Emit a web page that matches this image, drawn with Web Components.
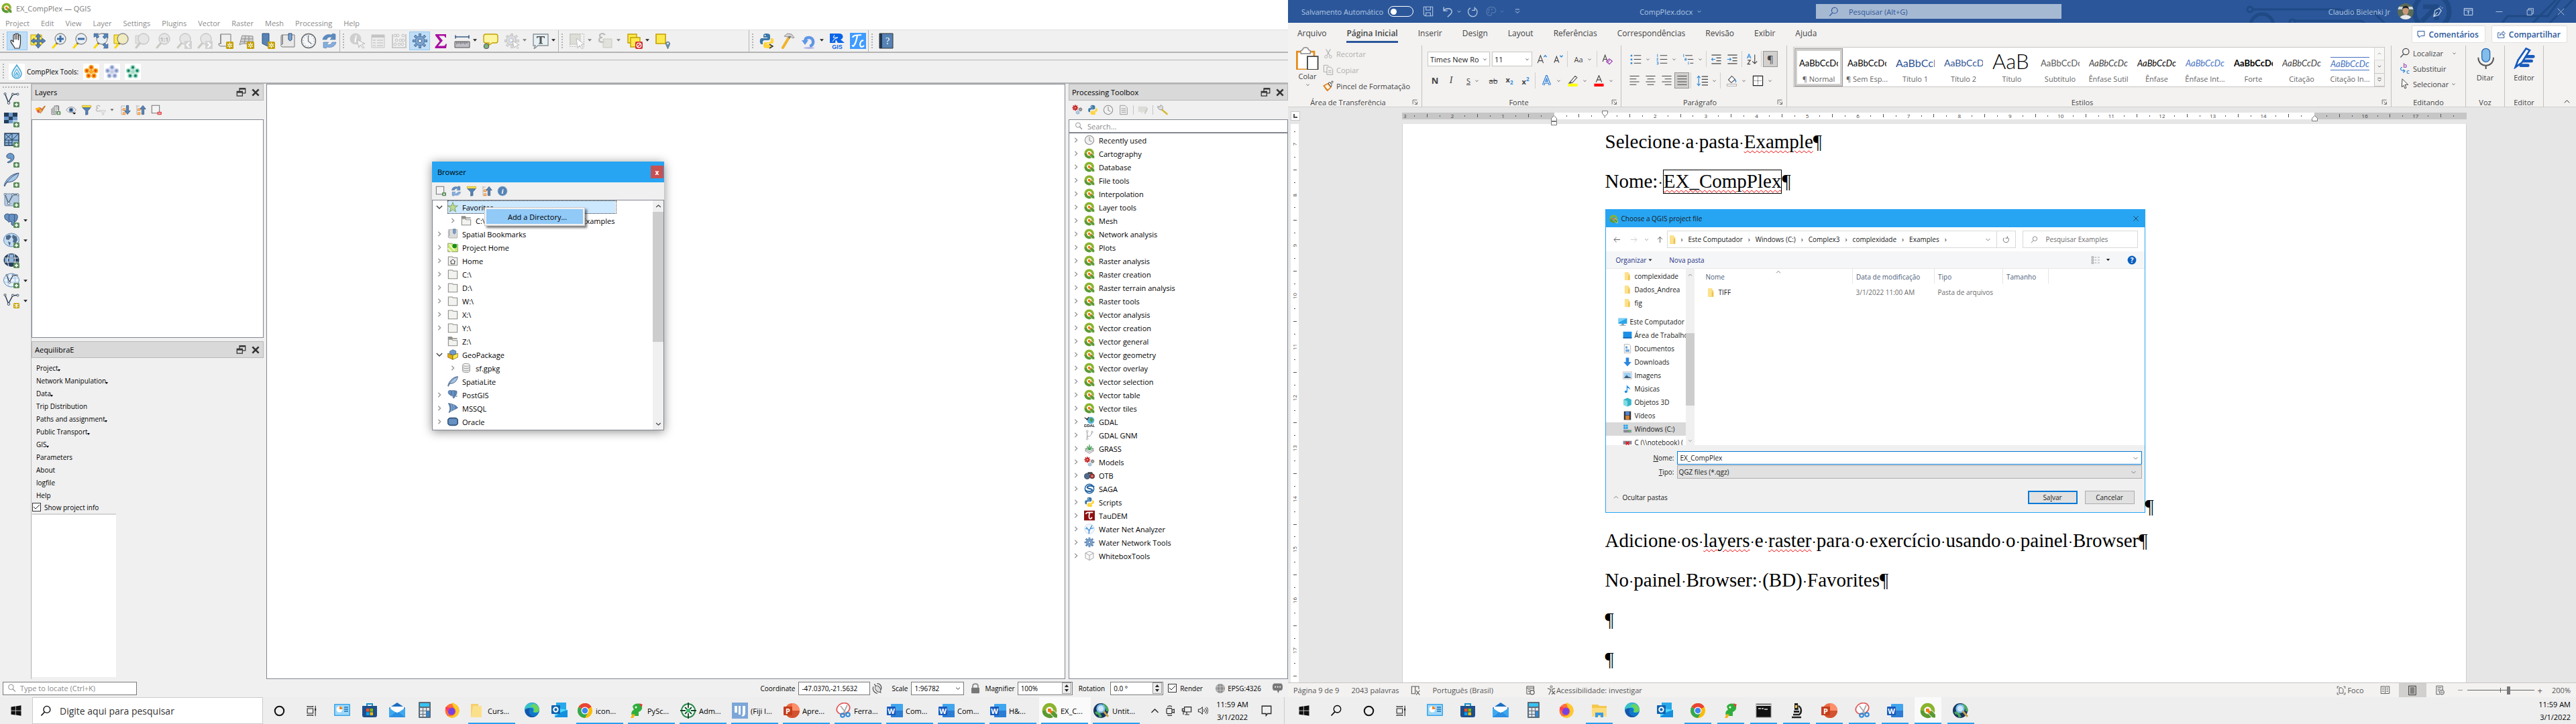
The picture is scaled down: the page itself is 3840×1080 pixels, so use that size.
<!DOCTYPE html>
<html lang="pt-BR">
<head>
<meta charset="utf-8">
<title>EX_CompPlex — QGIS / CompPlex.docx</title>
<style>
  html, body { margin: 0; height: 100%; }
  body { overflow: hidden; font-family: "Open Sans", "Noto Sans", sans-serif; font-size: 11px; color: #000; background: #fff; }
</style>
</head>
<body>
<desk-top></desk-top>
<script>
/* ---------- icon drawings, 24 x 24 unless a view box is given ---------- */
const plus = '<rect x="15" y="15" width="9" height="8" rx="1.5" fill="#5a8c5a"/><path d="M19.500 16.500v5M17 19h5" stroke="#fff" stroke-width="1.600"/>';
const star = '<rect x="13" y="13" width="11" height="11" rx="1.500" fill="#c4a000"/><path d="M18.500 14.500v8M15 16.500l7 4M22 16.500l-7 4" stroke="#fff" stroke-width="1.400"/><circle cx="18.500" cy="18.500" r="1" fill="#c4a000"/>';
const lens = (f, s, h) => `<path d="M9 15L3 22" stroke="${h}" stroke-width="3" stroke-linecap="round"/><path d="M10 14l-2 2.500" stroke="#555" stroke-width="3"/><circle cx="14" cy="9" r="8" fill="${f}" stroke="${s}" stroke-width="1.300"/>`;
const paleLens = '<path d="M9 15L3 22" stroke="#c9c9c4" stroke-width="3" stroke-linecap="round"/><circle cx="14" cy="9" r="8" fill="#e6e6e6" stroke="#c6c6c6" stroke-width="1.300"/>';
const vee = (c) => `<path d="M2.500 3l5 13L14 4l8-1" fill="none" stroke="${c}" stroke-width="1.500"/><g fill="#fff" stroke="${c}"><circle cx="2.500" cy="3" r="1.500"/><circle cx="8" cy="16.500" r="1.800"/><circle cx="14" cy="3.500" r="1.500"/><circle cx="21.500" cy="3.500" r="1.500"/></g>`;
const elephant = '<path d="M2 4c2-3 6-2 7-1 2-1 6-1 8 0 3-1 5 1 4 5-.5 3-2 5-3.500 6l-.5-2-1 5c0 3-4 3-4 0v-4l-3 1c0 0-1 1-2-.500l-1-2C3 12 1 7 2 4z" fill="#6691c2" stroke="#33527a"/><path d="M9 3c-1 3-1 6 0 9M16 3c1 3 1 6 0 9" stroke="#33527a" fill="none"/>';
const pyth = '<path d="M12 1c-5 0-5 2-5 4v2h6v1H4c-3 0-3 9 0 9h2v-3c0-2 1-3 3-3h5c2 0 3-1 3-3V4c0-2-2-3-5-3z" fill="#3b77a8"/><path d="M13 23c5 0 5-2 5-4v-2h-6v-1h8c3 0 3-8 0-8h-2v3c0 2-1 3-3 3h-5c-2 0-3 1-3 3v3c0 2 2 3 6 3z" fill="#ffd43b"/><circle cx="9.500" cy="4" r="1" fill="#fff"/>';
const gear = (c, s, hole) => `<g stroke="${s}" stroke-width="4"><path d="M12 1v22M1 12h22M4.200 4.200l15.600 15.600M19.800 4.200L4.200 19.800"/></g><g stroke="${c}" stroke-width="2.600"><path d="M12 2v20M2 12h20M5 5l14 14M19 5L5 19"/></g><circle cx="12" cy="12" r="7" fill="${c}" stroke="${s}" stroke-width=".7"/><circle cx="12" cy="12" r="2.600" fill="${hole}" stroke="${s}"/>`;
const refresh = '<path d="M2 10c1-6 7-9 13-7l2-2 4 1v8h-8l3-3c-4-2-7 0-8 3z" fill="#5d8cc0" stroke="#3d6a9a" stroke-width=".5"/><path d="M22 14c-1 6-7 9-13 7l-2 2-4-1v-8h8l-3 3c4 2 7 0 8-3z" fill="#86aede" stroke="#3d6a9a" stroke-width=".5"/>';
const folderGrey = '<path d="M2 3h9l2 2h9v17H2z" fill="#f2f2f0" stroke="#8b8b86" stroke-width="1.600"/>';
const folderY = '<path d="M5 2h10v4h3v16H5z" fill="#f8d775"/><path d="M15 10h3v12H8z" fill="#eec250"/><path d="M5 2h9v20H5z" fill="#fde28b"/>';
const qlogo = '<circle cx="11.500" cy="11.500" r="8" fill="none" stroke="#8ab42c" stroke-width="5.500"/><path d="M3.500 12a8 8 0 0 0 13 6.500" fill="none" stroke="#5b9a33" stroke-width="5.500"/><path d="M13 12h5l5.500 6v5h-4.500l-6-6z" fill="#5b9a33" stroke="#fff" stroke-width="1"/><path d="M9 9h5l-.5 2 3 3-3 2.500-3-3-1.500 1z" fill="#ee7913"/>';
const flower = (a, b) => `<rect width="24" height="24" fill="#fff"/><g fill="${a}"><circle cx="12" cy="5.500" r="3.800"/><circle cx="5.500" cy="10.500" r="3.800"/><circle cx="18.500" cy="10.500" r="3.800"/><circle cx="8" cy="18" r="3.800"/><circle cx="16" cy="18" r="3.800"/><circle cx="12" cy="12" r="3"/></g><g fill="${b}"><circle cx="12" cy="5.500" r="2"/><circle cx="5.500" cy="10.500" r="2"/><circle cx="18.500" cy="10.500" r="2"/><circle cx="8" cy="18" r="2"/><circle cx="16" cy="18" r="2"/></g>`;
const office = (c1, c2, c3, ch) => `<rect x="6" y="2" width="18" height="20" rx="1" fill="${c2}"/><path d="M6 12h18v9a1 1 0 0 1-1 1H7a1 1 0 0 1-1-1z" fill="${c3}"/><rect y="6" width="13" height="13" rx="1" fill="${c1}"/><text x="6.500" y="16.500" font-size="11" font-weight="700" text-anchor="middle" fill="#fff" font-family="Open Sans">${ch}</text>`;
const ln = (rows) => `<path d="${rows.map(([x, y, w]) => `M${x} ${y}h${w}`).join('')}" stroke="#444" stroke-width="1.500"/>`;
const tri = '<path d="M7 9h10l-5 6z" fill="#222"/>';

const ICONS = {
  qgis: qlogo,
  hand: '<path d="M8 23c-1-4-6-7-6-11 1-2 3 0 4 2V4c0-2 2.500-2 2.500 0v6V2.500c0-2 2.500-2 2.500 0V10V2.500c0-2 2.500-2 2.500 0V11l.5-6.500c0-2 2.500-2 2.500 0V14c0 4-1 6-1.500 9z" fill="#fff" stroke="#333" stroke-width="1.200"/>',
  panmap: '<path d="M1 3h16v15H1z" fill="#fce94f" stroke="#c4a000"/><path d="M12 1l4 5h-2.500v4.500H18V8l5 4-5 4v-2.500h-4.500V18H16l-4 5-4-5h2.500v-4.500H6V16l-5-4 5-4v2.500h4.500V6H8z" fill="#5683b5" stroke="#2f4f7c" stroke-width=".7"/>',
  zoomin: lens('#e8eff5', '#8a8a8a', '#fcd800') + '<path d="M14 4v10M9 9h10" stroke="#3d6ea8" stroke-width="3"/>',
  zoomout: lens('#e8eff5', '#8a8a8a', '#fcd800') + '<path d="M9 9h10" stroke="#3d6ea8" stroke-width="3"/>',
  zoomfull: lens('#e8eff5', '#8a8a8a', '#fcd800') + '<g fill="#5683b5" stroke="#2f4f7c" stroke-width=".5"><path d="M2 1h7L7 3l3 3-3 2-3-3-2 2z"/><path d="M23 1v7l-2-2-3 3-3-3 3-3-2-2z"/><path d="M23 23h-7l2-2-3-3 3-3 3 3 2-2z"/></g>',
  zoomsel: '<path d="M1 3h11v13H1z" fill="#fce94f" stroke="#c4a000"/>' + lens('#f0ebc0', '#8a8a8a', '#fcd800'),
  zoomlay: '<path d="M2 4h9v12H2z" fill="#e2e2e0" stroke="#ccc"/>' + paleLens,
  zoomnat: paleLens + '<text x="14" y="12.500" font-size="9" font-weight="700" text-anchor="middle" fill="#b5b5b5" font-family="Open Sans">1:1</text>',
  zoomlast: paleLens + '<rect x="13" y="12" width="11" height="12" fill="#d2d2d2"/><path d="M20.500 14l-4 4 4 4" fill="none" stroke="#fff" stroke-width="2"/>',
  zoomnext: paleLens + '<rect x="13" y="12" width="11" height="12" fill="#d2d2d2"/><path d="M16.500 14l4 4-4 4" fill="none" stroke="#fff" stroke-width="2"/>',
  newmap: '<path d="M5 2h15v18H6c-3 0-4-1-4-4h3z" fill="#eee" stroke="#777"/><path d="M5 2v15" stroke="#777"/>' + star,
  map3d: '<path d="M6 4l16 1v13l-12-2c-2 0-4 0-8 2z" fill="#d5d5d5" stroke="#8d8d8d"/><path d="M5 9h17M4 13h18M11 4l-2 12M16 4v13" stroke="#8d8d8d" fill="none"/>' + star,
  bookmark: '<path d="M5 1h10v20l-10-5z" fill="#5683b5" stroke="#2f4f7c"/>' + star,
  newbm: '<path d="M4 3h18v18H4c-3 0-3-4 0-4z" fill="#e8e8e8" stroke="#777"/><path d="M4 3v14M4 3c-2 0-2 1-2 3v12" stroke="#777" fill="none"/><path d="M13 1h5v9l-2.500 2-2.500-2z" fill="#7ba3d0" stroke="#2f4f7c"/>',
  clock: '<circle cx="12" cy="12" r="10.500" fill="#f4f6f8" stroke="#666" stroke-width="1.400"/><circle cx="12" cy="12" r="8" fill="none" stroke="#5a7ea8" stroke-dasharray="1 3.190"/><path d="M11.500 4v8.500l5 4" fill="none" stroke="#777" stroke-width="1.400"/>',
  clockpale: '<circle cx="12" cy="12" r="10" fill="#f2f2f2" stroke="#8d8d8d" stroke-width="1.600"/><path d="M12 5v7.500l5 3" fill="none" stroke="#8d8d8d" stroke-width="1.600"/>',
  refresh,
  identify: '<circle cx="9" cy="9" r="8.500" fill="#cfcfcf"/><text x="9" y="14" font-size="14" font-style="italic" font-weight="700" text-anchor="middle" fill="#fff" font-family="Liberation Serif">i</text><path d="M11 10l12 6-5 1 4 5-2 1-4-5-2 4z" fill="#f4f4f4" stroke="#bbb"/>',
  attr: '<path d="M2 3h19v19H2z" fill="#ececec" stroke="#c4c4c4"/><path d="M2 5h19" stroke="#c4c4c4" stroke-width="4"/><path d="M4 11h4M10 11h9M4 15h4M10 15h9M4 19h4M10 19h9" stroke="#c9c9c9" stroke-width="1.500"/>',
  abacus: '<path d="M2 2v20M22 2v20M1 22h22" stroke="#c0c0c0" stroke-width="1.600"/><g fill="#eee" stroke="#c0c0c0"><circle cx="6" cy="4" r="2"/><circle cx="10" cy="4" r="2"/><circle cx="18" cy="4" r="2"/><circle cx="8" cy="11" r="2"/><circle cx="14" cy="11" r="2"/><circle cx="18" cy="11" r="2"/><circle cx="6" cy="17" r="2"/><circle cx="12" cy="17" r="2"/><circle cx="17" cy="17" r="2"/></g>',
  gearblue: gear('#7ea3ce', '#3d6a9a', '#e8f1fa'),
  sigma: '<path d="M4 2h16v5h-1.500c-.5-2-1-2.500-3-2.500H9l6 7-7 8h8c2 0 2.500-1 3.500-3H21l-1 6.500H3.500V21l7-8.500L4 4z" fill="#a80e9e"/>',
  ruler: '<path d="M2 6h20M2 3.500v5M22 3.500v5" stroke="#3b5d86" stroke-width="1.600"/><path d="M1 13h22v9H1z" fill="#bdbdc4" stroke="#555"/><path d="M4 13v4M7 13v3M10 13v4M13 13v3M16 13v4M19 13v3" stroke="#555"/>',
  tip: '<path d="M5 2h15a3 3 0 0 1 3 3v7a3 3 0 0 1-3 3h-5l-6 4 1-4H5a3 3 0 0 1-3-3V5a3 3 0 0 1 3-3z" fill="#fcf4a0" stroke="#c4a000" stroke-width="1.400"/><circle cx="6" cy="20" r="3.800" fill="#7bb07b" stroke="#555"/>',
  gearrun: gear('#dcdcdc', '#c6c6c6', '#dcdcdc').replace(/<circle.*$/, '<circle cx="11" cy="11" r="7" fill="#e2e2e2" stroke="#bbb"/>') + '<circle cx="11" cy="11" r="4.500" fill="#ccd3da"/><path d="M9.500 8.500l4 2.500-4 2.500z" fill="#fff"/><path d="M13 12l10 6-4 .8 3 4-1.500.8-3-4-2 3z" fill="#fff" stroke="#bbb"/>',
  text: '<path d="M1 2h22v17H8l-6 5 2-5H1z" fill="#e6f0f5" stroke="#8b9297" stroke-width="1.400"/><path d="M6 5h12v3h-1l-.5-1.500h-3V15l1.500.5v1H9v-1l1.500-.5V6.500h-3L7 8H6z" fill="#555"/>',
  select: '<path d="M1.500 1.500h21v19h-21z" fill="none" stroke="#b8b8b8" stroke-dasharray="2 1.500"/><path d="M2 2h15v15H2z" fill="#deded8" stroke="#c6c6c0"/><path d="M11 8l12 9-5 .8 3.500 5-2 1-3.500-5-3 4z" fill="#fff" stroke="#bbb"/>',
  expr: '<path d="M11 3c-3-3-8-2-8 1 0 2 2 3 4 3-3 0-5 1-5 4 0 3 6 4 9 1" fill="none" stroke="#bbb" stroke-width="2.200"/><path d="M8 9h13v13H8z" fill="#deded8" stroke="#c8c8c0" fill-opacity=".8"/>',
  desel: '<path d="M2 2h13v13H2z" fill="#fce94f" stroke="#c4a000" stroke-width="1.400"/><path d="M6 7h14v14H6z" fill="#fce94f" stroke="#c4a000" stroke-width="1.400"/><rect x="13" y="13" width="11" height="11" rx="2" fill="#d4292b"/><circle cx="18.500" cy="18.500" r="3.300" fill="none" stroke="#fff" stroke-width="1.300"/><path d="M21 16l-5 5" stroke="#fff" stroke-width="1.300"/>',
  selloc: '<path d="M2 2h14v14H2z" fill="#fce94f" stroke="#c4a000" stroke-width="1.600"/><path d="M19.500 24l-3-7c-1-5 7-5 6 0z" fill="#6d8fa8" stroke="#4a6a80" stroke-width=".7"/><circle cx="19.500" cy="16" r="1.300" fill="#fff"/>',
  python: pyth, pythoncon: pyth + '<path d="M16 17l5 3-5 3" fill="none" stroke="#333" stroke-width="1.500"/>',
  hammer: '<path d="M5 22L14 7" stroke="#f0b429" stroke-width="4" stroke-linecap="round"/><path d="M14 8l2-3" stroke="#777" stroke-width="3"/><path d="M7 5l5-4 6 1 4 5-2 1-4-3-5 1z" fill="#d5d5d5" stroke="#777" stroke-width=".8"/>',
  undo: '<path d="M13 20c7-1 7-13-1-13-4 0-6 2-6 6" fill="none" stroke="#5f96e6" stroke-width="4.500"/><path d="M1 11h10l-5 7z" fill="#5f96e6"/><ellipse cx="12" cy="22.500" rx="8" ry="1.500" fill="#b3b3e6"/>',
  rgis: '<path d="M1 1h14c7 0 7 8 2 9l6 5H13l-3-5-1 5H1z" fill="#0a64e8"/><path d="M8 3l-2 4h7l-5 2-3 4" stroke="#fff" fill="none"/><text x="12" y="23.500" font-size="9" font-weight="700" text-anchor="middle" fill="#0a64e8" font-family="Liberation Sans">GIS</text>',
  tc: '<rect width="24" height="24" fill="#3f9bff"/><path d="M4 7c1-4 5-3 13-4M11 4c-1 6-2 12-6 16M20 12c-4-3-7 8-3 9 2 0 3-1 4-2M3 19l3 1" fill="none" stroke="#fff" stroke-width="2.200"/>',
  book: '<path d="M2 1h20v22H2z" fill="#5683b5" stroke="#333"/><path d="M2 1h4v22H2z" fill="#22364e"/><text x="14" y="17" font-size="14" text-anchor="middle" fill="#fff" font-family="Liberation Serif">?</text>',
  drop: '<rect width="24" height="24" fill="#fff"/><path d="M12 2c3 5 7 9 7 13a7 7 0 0 1-14 0c0-4 4-8 7-13z" fill="#e6f5fc" stroke="#4fa9d6" stroke-width="1.600"/><path d="M12 8c2 3 4 5 4 8a4 4 0 0 1-8 0c0-3 2-5 4-8zM12 13l2 4h-4z" fill="none" stroke="#4fa9d6" stroke-width="1.200"/>',
  flower1: flower('#f9a825', '#e65100'), flower2: flower('#c3cde8', '#8093c4'), flower3: flower('#a5dcc6', '#11806a'),
  addvec: vee('#2d3f56') + plus,
  addras: '<path d="M1 1h20v16H1z" fill="#6d9acb"/><path d="M1 1h7v6H1zM14 1h7v6h-7zM8 7h6v5H8zM1 12h7v5H1z" fill="#253d58"/><path d="M14 12h7v5h-7z" fill="#b8d0ea"/>' + plus,
  addmesh: '<path d="M2 2h21v18H2z" fill="#8db4dc" stroke="#253d58" stroke-width="1.400"/><path d="M2 2l11 10M13 2L2 12M2 12h21M13 2v18M13 12L23 2M8 12v8M2 16h11" stroke="#253d58" fill="none"/>' + plus,
  addcsv: '<path d="M5 5c2-5 11-4 11 2 0 6-5 8-9 9l-1-1c4-2 6-4 5-6-3 1-7 0-6-4z" fill="#6d9acb" stroke="#33527a"/>' + plus,
  addlite: '<path d="M1 20c2-7 8-17 22-19-1 7-6 14-18 14l-3 6z" fill="#a9c6e6" stroke="#33527a"/><path d="M3 18C8 10 14 5 21 2" stroke="#33527a" fill="none"/>' + plus,
  addvirt: '<rect x="2" y="2" width="21" height="18" rx="2" fill="#b5cbe2" stroke="#7b92ad"/>' + vee('#55687e') + plus,
  addpg: elephant + plus,
  addwms: '<ellipse cx="12" cy="11" rx="11.500" ry="10" fill="#c4daf0" stroke="#5f8ab8"/><path d="M4 5l5-2 3 3-4 5-4-1zM14 3l6 3 1 5-3 5-4-2 1-4-2-3zM7 13l4 2-2 5z" fill="#4d6b8c"/>' + plus,
  addwcs: '<ellipse cx="12" cy="11" rx="11.500" ry="10" fill="#25405f"/><path d="M2 8h20M2 14h20M8 2c-2 6-2 12 0 18M16 2c2 6 2 12 0 18" stroke="#fff" fill="none"/><path d="M8.500 8.500h7v5h-7zM9 2.500h6V7H9zM2.500 9h4v4h-4z" fill="#8fb6e0"/>' + plus,
  addwfs: '<ellipse cx="12" cy="11" rx="11.500" ry="10" fill="#eaf2fa" stroke="#5f8ab8"/><path d="M2 8h20M2 14h20M8 2c-2 6-2 12 0 18M16 2c2 6 2 12 0 18" stroke="#9fc0e2" fill="none"/><g transform="translate(3 1) scale(.8)">' + vee('#2d3f56') + '</g>' + plus,
  newvec: vee('#2d3f56') + '<rect x="15" y="15" width="9" height="8" rx="1.500" fill="#c4a000"/><path d="M19.500 16v6M16.500 17l6 4M22.500 17l-6 4" stroke="#fff" stroke-width="1.300"/>',
  style: '<path d="M1 9l10-3 8 6-9 6z" fill="#f08"/><path d="M1 9l9-3 3 3-9 6z" fill="#fb0"/><path d="M4 13l7-3 3 4-7 5z" fill="#e44"/><path d="M9 14l5-4 3 5-5 4z" fill="#49c"/><path d="M13 12l9-10 2 2-8 11z" fill="#c87f2b"/><path d="M8 12l5-3 4 5-5 6z" fill="#e8a94a" stroke="#a56a20" stroke-width=".6"/>',
  group: '<path d="M9 3h10v13H9zM6 6v13h10M3 9v13h10" fill="none" stroke="#777" stroke-width="1.500"/><path d="M13 14V5c0-4 4-4 4 0v8" fill="none" stroke="#777" stroke-width="1.300"/><rect x="14" y="15" width="9" height="8" rx="1.500" fill="#5a8c5a"/><path d="M18.500 16.500v5M16 19h5" stroke="#fff" stroke-width="1.500"/>',
  eye: '<path d="M1 12c5-9 17-9 22 0-5 8-17 8-22 0z" fill="#eee" stroke="#999" stroke-width="1.500"/><circle cx="12" cy="12" r="5" fill="#5683b5"/><circle cx="12" cy="12" r="2" fill="#222"/><path d="M15 18h8l-4 4z" fill="#111"/>',
  filter: '<path d="M2 2h20v4H2z" fill="#fce94f" stroke="#b99b00"/><path d="M3 7h18l-6 7v8l-5 1v-9z" fill="#5683b5" stroke="#33527a"/>',
  filterexp: '<path d="M11 4c-3-3-8-2-8 1 0 2 2 3 4 3-3 0-5 1-5 4 0 3 6 4 9 1" fill="none" stroke="#bbb" stroke-width="2"/><path d="M11 13h12v2l-4 3v5h-3v-5l-5-3z" fill="#e6e6e6" stroke="#c4c4c4"/>',
  expand: '<path d="M3 3h8M3 3v19h4M3 12h4" stroke="#999" fill="none"/><path d="M7 9h4v4H7zM7 18h4v4H7z" fill="#fff" stroke="#f57900" stroke-width="1.600"/><path d="M14 2h5v12h4l-6.500 8L10 14h4z" fill="#5683b5" stroke="#33527a"/>',
  collapse: '<path d="M1 3h8M3 3v19h4M3 12h4" stroke="#999" fill="none"/><path d="M6 9h4v4H6zM6 18h4v4H6z" fill="#fff" stroke="#f57900" stroke-width="1.600"/><path d="M14 22h5V10h4L16.500 2 10 10h4z" fill="#5683b5" stroke="#33527a"/>',
  rmlayer: '<path d="M2 2h17v17H2z" fill="#f4f4f4" stroke="#777" stroke-width="1.600"/><rect x="14" y="16" width="10" height="7" rx="2" fill="#e8424a"/><path d="M16 19.500h6" stroke="#fff" stroke-width="1.600"/>',
  addlayer: '<path d="M2 2h17v17H2z" fill="#f4f4f4" stroke="#777" stroke-width="1.600"/><rect x="15" y="15" width="9" height="8" rx="2" fill="#5a8c5a"/><circle cx="19.500" cy="19" r="1.800" fill="#fff"/>',
  info: '<circle cx="12" cy="12" r="10.500" fill="#5683b5" stroke="#8aa8cc"/><text x="12" y="18" font-size="17" font-style="italic" font-weight="700" text-anchor="middle" fill="#fff" font-family="Liberation Serif">i</text>',
  float: '<path d="M8 3h14v11H8z" fill="none" stroke="#333" stroke-width="2"/><path d="M8 4h14" stroke="#333" stroke-width="3.500"/><path d="M2 10h13v11H2z" fill="#d9d9d9" stroke="#333" stroke-width="2"/><path d="M2 12h13" stroke="#333" stroke-width="3.500"/>',
  closex: '<path d="M4 4l16 16M20 4L4 20" stroke="#333" stroke-width="4.500"/>',
  chev: '<path d="M8 4l8 8-8 8" fill="none" stroke="#9a9a9a" stroke-width="3.400"/>',
  chevopen: '<path d="M2 7l10 10L22 7" fill="none" stroke="#444" stroke-width="3.400"/>',
  down: '<path d="M3 8l9 8 9-8" fill="none" stroke="#444" stroke-width="3"/>',
  up: '<path d="M3 16l9-8 9 8" fill="none" stroke="#444" stroke-width="3"/>',
  tri, starfav: '<path d="M12 1l3 8h8l-6.500 5 2.500 8.500-7-5-7 5L7.500 14 1 9h8z" fill="#b9dc92" stroke="#7d9460" stroke-width="1.300"/>',
  folder: folderGrey, folderlink: '<path d="M1 2h9l2 3h10v2H1z" fill="#8b8b86"/><path d="M2 8h8l2 2h10v12H2z" fill="#f2f2f0" stroke="#8b8b86" stroke-width="1.600"/>',
  folderhome: folderGrey + '<path d="M6 14l6-5 6 5M8 13v6h8v-6" fill="none" stroke="#333" stroke-width="1.400"/>',
  projhome: '<path d="M1 3h9l2 2h11v17H1z" fill="#cdea6e" stroke="#777"/><path d="M1 14l8 8M4 5l12 14" stroke="#fff" stroke-width="2"/><circle cx="16" cy="9" r="5" fill="#169016"/>',
  sbm: '<path d="M4 2h18v19H4c-3 0-3-4 0-4z" fill="#dcdcdc" stroke="#999"/><path d="M4 2v15M4 2c-2 0-2 2-2 3v13" stroke="#999" fill="#eee"/><path d="M13 1h5v9l-2.500 2-2.500-2z" fill="#7ba3d0" stroke="#4a6a90"/>',
  gpkg: '<path d="M12 1l7 3v8H5V5z" fill="#6d9acb" stroke="#33527a"/><path d="M1 9l11 5v9L1 18z" fill="#e0ae12" stroke="#6b5200"/><path d="M23 9l-11 5v9l11-5z" fill="#fce94f" stroke="#6b5200"/>',
  db: '<path d="M4 5v14c0 4 16 4 16 0V5" fill="#eee" stroke="#999" stroke-width="1.500"/><ellipse cx="12" cy="5" rx="8" ry="3" fill="#f8f8f8" stroke="#999" stroke-width="1.500"/><path d="M4 10c0 4 16 4 16 0M4 15c0 4 16 4 16 0" fill="none" stroke="#999" stroke-width="1.500"/>',
  lite: '<path d="M1 22c2-8 8-19 22-21-1 8-6 16-18 16l-3 6z" fill="#a9c6e6" stroke="#33527a" stroke-width="1.300"/><path d="M3 19C8 11 14 5 21 2" stroke="#33527a" fill="none"/>',
  pg: elephant + '<path d="M17 15h5" stroke="#33527a" stroke-width="1.500"/>',
  mssql: '<path d="M2 1c8 1 18 4 21 10-6 4-12 5-20 11 4-8 3-14-1-21z" fill="#5683b5" stroke="#33527a"/><path d="M8 3c3 5 3 10 0 15M13 4c3 5 2 8 1 11" stroke="#cfe0f2" fill="none"/>',
  oracle: '<rect x="1" y="4" width="22" height="16" rx="6" fill="#6691c2" stroke="#33527a" stroke-width="2.500"/>',
  bluebox: '<path d="M1 1h22v22H1z" fill="#5a96d6"/>',
  gdal: '<circle cx="15" cy="9" r="8" fill="#5ab3dc"/><path d="M12 6l5-3 4 5-5 6z" fill="#4a9a4a"/><path d="M1 3l8 5M5 8l6-6" stroke="#333" stroke-width="2"/><text x="12" y="23.500" font-size="9" font-weight="700" text-anchor="middle" fill="#111" font-family="Liberation Sans">GDAL</text>',
  gnm: '<path d="M7 4v16M7 15c6 0 9-1 10-8" fill="none" stroke="#999" stroke-width="1.500"/><circle cx="7" cy="3.500" r="2" fill="#fff" stroke="#888"/><circle cx="7" cy="20.500" r="2" fill="#fff" stroke="#888"/><circle cx="18" cy="5.500" r="2" fill="#fff" stroke="#888"/>',
  grass: '<path d="M12 12l10 5-10 6-10-6z" fill="#eee" stroke="#666"/><path d="M12 8l10 5-10 6-10-6z" fill="#fff" stroke="#666"/><path d="M12 16V3M12 15L7 7M12 15l5-8M12 15l-7-3M12 15l7-3" stroke="#2d9a41" stroke-width="1.700"/>',
  models: '<g transform="translate(0 0) scale(.6)">' + gear('#d4292b', '#b01e20', '#fff') + '</g><g transform="translate(14 6) scale(.4)">' + gear('#888', '#777', '#fff') + '</g><g transform="translate(8 13) scale(.4)">' + gear('#a9c6e6', '#8ab', '#fff') + '</g>',
  otb: '<circle cx="7" cy="14" r="6.500" fill="#4c6c92" stroke="#333"/><circle cx="18" cy="14" r="5.500" fill="#bf2734" stroke="#333"/><path d="M8 5h10l2 4H9z" fill="#444"/><circle cx="18" cy="14" r="2" fill="#8c8"/>',
  saga: '<circle cx="12" cy="12" r="10" fill="#fff" stroke="#1b5fa0" stroke-width="2.200"/><path d="M23 8c-6-4-15-3-16 1 0 4 11 2 11 6 0 4-10 4-16 0" fill="none" stroke="#1b5fa0" stroke-width="3"/>',
  tau: '<rect y="1" width="24" height="22" fill="#8c0f12"/><path d="M4 9c1-5 4-4 16-4M13 5c-2 4-3 13 0 14 3 1 4-2 5-3" fill="none" stroke="#fff" stroke-width="2.600"/>',
  wna: '<circle cx="12" cy="12" r="11" fill="#f2f7fb" stroke="#bcd"/><path d="M11 23c-1-6 0-8 3-12l4-7M13 12l8-2M11 16L5 8M7 11L3 12" fill="none" stroke="#3b8ad6" stroke-width="1.800"/>',
  wbt: '<path d="M12 2l9 4v11l-9 5-9-5V6zM3 6l9 5 9-5M12 11v11" fill="#fafafa" stroke="#999" stroke-width="1.300"/>',
  doc: '<path d="M4 2h11l5 5v15H4z" fill="#eee" stroke="#999" stroke-width="1.400"/><path d="M7 9h10M7 13h10M7 17h10" stroke="#999" stroke-width="1.400"/>',
  editm: '<path d="M1 4h20v12h-9l-4 5v-5H1z" fill="#dcdcd8"/><path d="M14 20l7-13 2 2-6 12z" fill="#c9c9c4"/>',
  wrench: '<path d="M9 10l14 12" stroke="#e3cc55" stroke-width="4.500"/><path d="M9 10l14 12" stroke="#7a6a20" stroke-width=".6"/><path d="M1 4l5 1 2-4c4 1 6 5 4 9L9 12C5 12 1 9 1 4z" fill="#ddd" stroke="#777"/>',
  search: '<circle cx="14" cy="9" r="7" fill="none" stroke="currentColor" stroke-width="1.800"/><path d="M9 14.500L2 22" stroke="currentColor" stroke-width="2"/>',
  searchr: '<circle cx="10" cy="9" r="7" fill="none" stroke="#888" stroke-width="1.800"/><path d="M15 14.500l7 7" stroke="#888" stroke-width="2.200"/>',
  lock: '<path d="M6 11V7c0-7 12-7 12 0v4" fill="none" stroke="#888" stroke-width="2.500"/><rect x="3" y="10" width="18" height="13" rx="2" fill="#777"/>',
  mouse: '<path d="M5 2l15 20M11 1c8 0 12 8 8 15M3 8c-3 7 2 14 9 15" stroke="#555" stroke-width="2" fill="none"/><ellipse cx="13" cy="13" rx="5" ry="8" transform="rotate(-35 13 13)" fill="#ddd" stroke="#555" stroke-width="1.500"/>',
  globe: '<circle cx="12" cy="12" r="10.500" fill="#8c8c8c"/><path d="M2 8h20M2 16h20M12 1v22M7 2c-3 7-3 13 0 20M17 2c3 7 3 13 0 20" stroke="#ddd" fill="none"/>',
  bubble: '<path d="M5 2h14c5 0 5 15 0 15h-3l-3 6-2-6H5C0 17 0 2 5 2z" fill="#777"/><path d="M6 9.500h2.500M11 9.500h2.500M16 9.500h2.500" stroke="#fff" stroke-width="2.500"/>',
  /* --- taskbar --- */
  win: '<path d="M2 4.500l8.500-1.200v8.200H2zM11.500 3.200L22 1.700v9.800H11.500zM2 12.500h8.500v8.200L2 19.500zM11.500 12.500H22v9.800l-10.500-1.500z" fill="#111"/>',
  cortana: '<circle cx="12" cy="12" r="8.500" fill="none" stroke="#111" stroke-width="2.600"/>',
  taskview: '<path d="M3 7h12v10H3zM3 4V1.500M15 4V1.500M3 20v2.500M15 20v2.500M3 3h12M3 21h12M20 1v22" fill="none" stroke="#222" stroke-width="1.500"/><path d="M18.500 7h3v4h-3z" fill="#222"/>',
  cpl: '<rect x="0" y="3" width="24" height="18" rx="1" fill="#3aa4e8"/><rect x="1.500" y="4.500" width="21" height="15" fill="#9fd8f8"/><circle cx="8" cy="11" r="4.500" fill="#fff"/><path d="M8 11V6.500a4.500 4.500 0 0 1 4.500 4.500z" fill="#f58220"/><path d="M15 8h6M15 11h6M15 14h6" stroke="#1b6fb5" stroke-width="1.500"/>',
  store: '<path d="M8 6V3h8v3" fill="none" stroke="#1593c9" stroke-width="2"/><path d="M1 6h22v14a3 3 0 0 1-3 3H4a3 3 0 0 1-3-3z" fill="#1f4e8c"/><path d="M7 10h4.500v4.500H7z" fill="#f25022"/><path d="M12.500 10H17v4.500h-4.500z" fill="#7fba00"/><path d="M7 15.500h4.500V20H7z" fill="#00a4ef"/><path d="M12.500 15.500H17V20h-4.500z" fill="#ffb900"/>',
  mail: '<path d="M0 9l12-8 12 8v14H0z" fill="#1b6fc2"/><path d="M2 7h20v7l-10 6L2 14z" fill="#fff"/><path d="M0 9l12 8 12-8v14H0z" fill="#3fa9f0"/><path d="M0 23l10-8 2 1.500 2-1.500 10 8z" fill="#2b8ee0"/>',
  calc: '<rect x="3" y="0" width="18" height="24" rx="1" fill="#5d6a78"/><path d="M5 2h14v5H5z" fill="#35c3f0"/><path d="M5 9h4v4H5zM10 9h4v4h-4zM15 9h4v4h-4zM5 14h4v4H5zM10 14h4v4h-4zM5 19h4v3H5zM10 19h4v3h-4z" fill="#dfe4e8"/><path d="M15 14h4v8h-4z" fill="#2b88d8"/>',
  firefox: '<circle cx="12" cy="13" r="10.500" fill="#ff7139"/><path d="M12 1c6 2 11 6 10.500 13A10.500 10.500 0 0 1 5 21c8 2 14-3 12-9-1-3-5-5-5-11z" fill="#ffca28"/><circle cx="11" cy="14" r="5.500" fill="#7542e4"/><path d="M2 8c2-1 6 0 8 2-3 0-4 2-3 4-3 0-5-2-5-6z" fill="#ff3d52"/>',
  folderw: '<path d="M3 2h11v3h5v17H3z" fill="#f5cf6b"/><path d="M6 5h13v17H3z" fill="#fbe08c"/>',
  explorer: '<path d="M1 3h9l2 2h11v16H1z" fill="#f5c84c"/><path d="M1 8h22v13H1z" fill="#fbdd7f"/><path d="M6 22v-7h12v7h-4v-3h-4v3z" fill="#3b9be6"/>',
  edge: '<circle cx="12" cy="12" r="11" fill="#1179c9"/><path d="M1 11C2 2 12-1 19 4c4 3 5 9 2 11-3 2-8 1-7-1 2-3-1-6-5-5-4 0-7 2-8 2z" fill="#38c3c9"/><path d="M14 3c6 1 10 6 8.500 10-2 4-8 3-8.500 1 4-5-2-8-6-6z" fill="#6ad45b"/><path d="M9 10c-4 5 0 13 9 11-8 5-16-1-16-8 1-3 4-4 7-3z" fill="#1554a8"/>',
  outlook: '<path d="M7 1h15v12H7z" fill="#28a8ea"/><path d="M5 9l19 3v10H5z" fill="#50d9ff"/><path d="M5 22l10-7 9-3v11H5z" fill="#1490df"/><rect y="5" width="13" height="13" rx="1" fill="#0f64b0"/><circle cx="6.500" cy="11.500" r="3.200" fill="none" stroke="#fff" stroke-width="2"/>',
  chrome: '<circle cx="12" cy="12" r="11" fill="#fbbc04"/><path d="M12 12L2.500 6.500A11 11 0 0 1 21.500 6.500z" fill="#ea4335"/><path d="M12 1a11 11 0 0 1 9.500 5.500H12z" fill="#ea4335"/><path d="M12 12l-9.500-5.500A11 11 0 0 0 12 23l4.500-8z" fill="#34a853"/><circle cx="12" cy="12" r="5.500" fill="#fff"/><circle cx="12" cy="12" r="4.300" fill="#4285f4"/>',
  pys: '<path d="M6 6c2-6 13-6 14 0 1 4-2 7-5 8v6H6c-3-2-2-8 2-9z" fill="#2fae3c"/><path d="M3 23l3-6 4 1-3 5z" fill="#f6b41a"/><path d="M16 1l5 2-2 4z" fill="#e33"/><circle cx="11" cy="7" r="1.500" fill="#fff"/>',
  adm: '<circle cx="12" cy="12" r="10" fill="#fff" stroke="#2b8a4b" stroke-width="2"/><path d="M12 0v8M12 16v8M0 12h8M16 12h8M7 7l3 3M17 7l-3 3M7 17l3-3M17 17l-3-3" stroke="#14452a" stroke-width="1.800"/><circle cx="12" cy="12" r="3" fill="#3fbf6b"/>',
  fiji: '<rect width="24" height="24" fill="#7ca6d8"/><path d="M4 5h4v10H4zM10 5h3v13h-3zM16 5h4v10c0 6-4 6-6 5 2-1 2-2 2-5z" fill="#fff"/>',
  ppt: '<circle cx="13" cy="12" r="11" fill="#ed6c47"/><path d="M13 1a11 11 0 0 1 11 11H13z" fill="#ff8f6b"/><path d="M2 12h22a11 11 0 0 1-22 0z" fill="#d35230"/><rect y="6" width="13" height="13" rx="1" fill="#c43e1c"/><text x="6.500" y="16.500" font-size="11" font-weight="700" text-anchor="middle" fill="#fff" font-family="Open Sans">P</text>',
  snip: '<ellipse cx="12" cy="9" rx="10" ry="8" transform="rotate(-25 12 9)" fill="#fff" stroke="#e05a5a" stroke-width="1.800"/><path d="M8 5l9 12M18 4l-6 13" stroke="#aaa" stroke-width="1.800"/><circle cx="11" cy="19" r="2.800" fill="none" stroke="#2b88d8" stroke-width="2"/><circle cx="19" cy="18" r="2.800" fill="none" stroke="#2b88d8" stroke-width="2"/>',
  word: office('#185abd', '#41a5ee', '#2b7cd3', 'W'),
  magnify: '<circle cx="11" cy="12" r="11" fill="#17365f"/><path d="M3 16c4-2 6 1 8 6M14 3c4 2 7 6 7 10" stroke="#4ba85a" stroke-width="4" fill="none"/><circle cx="11" cy="9" r="5.500" fill="#cfe6fb" stroke="#7cc0f0" stroke-width="2.500"/><path d="M15 13l7 8" stroke="#c9a14a" stroke-width="3"/>',
  cmd: '<rect x="1" y="2" width="22" height="20" fill="#111" stroke="#888"/><path d="M1 4h22" stroke="#ddd" stroke-width="2"/><path d="M4 9h4M9 9h3M13 10h5" stroke="#ddd" stroke-width="1.500"/>',
  micro: '<path d="M9 1h5l1 10h-6zM8 12h8v3H8z" fill="#222"/><path d="M15 5c5 3 5 10 1 13H7M5 22h14" stroke="#222" stroke-width="2.500" fill="none"/><path d="M10 4h3v4h-3z" fill="#f5c84c"/>',
  caretup: '<path d="M4 16l8-8 8 8" fill="none" stroke="#222" stroke-width="2"/>',
  meet: '<rect x="3" y="7" width="12" height="12" rx="2" fill="none" stroke="#222" stroke-width="1.700"/><path d="M15 11l5-2v8l-5-2M5 3.500c4-3 7-3 10 0M5 22c4 2 7 2 10 0" fill="none" stroke="#222" stroke-width="1.700"/>',
  net: '<path d="M7 4h15v11H7zM12 15v5M8 21h10M2 8h5v5H2zM4.500 13v8" fill="none" stroke="#222" stroke-width="1.700"/>',
  vol: '<path d="M2 9h4l5-5v16l-5-5H2z" fill="none" stroke="#222" stroke-width="1.500"/><path d="M14 9c2 2 2 4 0 6M17 6c4 4 4 8 0 12M20 4c5 5 5 11 0 16" fill="none" stroke="#222" stroke-width="1.500"/>',
  note: '<path d="M3 3h18v15h-7l-3 4v-4H3z" fill="none" stroke="#222" stroke-width="1.700"/>',
  /* --- word processor --- */
  save: '<path d="M2 2h20v20H5l-3-3zM7 2v7h10V2M7 22v-7h10v7" fill="none" stroke="currentColor" stroke-width="1.600"/>',
  wundo: '<path d="M3 2v8h8M3 10c5-7 17-6 17 2 0 4-4 6-9 11" fill="none" stroke="currentColor" stroke-width="2"/>',
  wredo: '<path d="M16 2v7h-6M16 9M7 4c-9 5-4 18 5 18 9 0 13-12 4-18" fill="none" stroke="currentColor" stroke-width="1.800"/>',
  palette: '<path d="M12 2c14 0 12 14 4 12-4-1-3 2-3 4 0 4-10 3-10-6C3 6 7 2 12 2z" fill="none" stroke="currentColor" stroke-width="1.500"/><circle cx="8" cy="8" r="1.500" fill="currentColor"/><circle cx="14" cy="7" r="1.500" fill="currentColor"/><circle cx="7" cy="13" r="1.500" fill="currentColor"/>',
  qat: '<path d="M6 6h12" stroke="currentColor" stroke-width="2"/><path d="M6 11l6 6 6-6" fill="none" stroke="currentColor" stroke-width="2"/>',
  wdown: '<path d="M5 9l7 7 7-7" fill="none" stroke="currentColor" stroke-width="2.800"/>',
  wpen: '<path d="M4 22l3-13L16 5l4 5-6 9zM4 22l8-9M18 2l1-1M21 4h2M14 4l2 1M20 10" fill="none" stroke="currentColor" stroke-width="1.700"/>',
  wopt: '<path d="M2 4h20v16H2zM2 8h20M12 18v-7M9 13.500l3-3 3 3" fill="none" stroke="currentColor" stroke-width="1.600"/>',
  wmin: '<path d="M3 12h18" stroke="currentColor" stroke-width="1.600"/>',
  wmax: '<path d="M4 7h13v14H4zM8 7V3h13v14h-4" fill="none" stroke="currentColor" stroke-width="1.600"/>',
  wclose: '<path d="M3 3l18 18M21 3L3 21" stroke="currentColor" stroke-width="1.600"/>',
  avatar: '<clipPath id="c"><circle cx="12" cy="12" r="12"/></clipPath><g clip-path="url(#c)"><rect width="24" height="24" fill="#5b6b58"/><path d="M0 5h24v4H0z" fill="#cdd6dc"/><path d="M2 24c2-9 18-9 20 0z" fill="#e8e8ea"/><ellipse cx="12" cy="11" rx="4.500" ry="6" fill="#c99a7a"/><path d="M7 9c0-7 10-7 10 0-3-3-7-3-10 0z" fill="#222"/></g>',
  comment: '<path d="M2 3h20v14H12l-6 5v-5H2z" fill="none" stroke="#2b579a" stroke-width="2"/>',
  share: '<path d="M8 7H3v14h17v-7M8 15c0-6 4-8 9-8V3l6 6-6 6v-4c-4 0-7 1-9 4z" fill="none" stroke="#2b579a" stroke-width="1.700"/>',
  paste: '<path d="M3 5h16v19H1V5z" fill="#fff" stroke="#e58c1e" stroke-width="2"/><path d="M5 7h10V4l-2-1c0-3-6-3-6 0L5 4z" fill="#fff" stroke="#888"/><path d="M12 10h11v14H12z" fill="#fff" stroke="#444" stroke-width="1.300"/>',
  cut: '<path d="M7 2l8 14M17 2L9 16" stroke="#b5b5b5" stroke-width="1.800"/><circle cx="7" cy="19" r="3" fill="none" stroke="#b5b5b5" stroke-width="1.500"/><circle cx="17" cy="19" r="3" fill="none" stroke="#b5b5b5" stroke-width="1.500"/>',
  copy: '<path d="M9 17H2V2h9l2 2M9 6h8l5 5v12H9zM12 14h7M12 18h7" fill="none" stroke="#aaa" stroke-width="1.500"/>',
  brush: '<path d="M2 12l9-5 7 8-8 8z" fill="#fff3e0" stroke="#e07b1a" stroke-width="2.400"/><path d="M5 15l6 7M3 12l5 9" stroke="#e07b1a" stroke-width="1.600"/><path d="M12 6l3-2 5 6-2 4zM17 6l4-5 2 2-4 5" fill="#fff" stroke="#444" stroke-width="1.500"/>',
  agrow: '<path d="M3 20L9 4l6 16M5 15h8" fill="none" stroke="#444" stroke-width="1.600"/><path d="M16 7l3-3 3 3" fill="none" stroke="#2b88d8" stroke-width="2"/>',
  ashrink: '<path d="M4 19L9 6l5 13M6 15h6" fill="none" stroke="#444" stroke-width="1.600"/><path d="M16 4l3 3 3-3" fill="none" stroke="#2b88d8" stroke-width="2"/>',
  aclear: '<path d="M3 17L8 3l5 14M5 12h6" fill="none" stroke="#444" stroke-width="1.600"/><path d="M11 17l6-6 6 5-6 6z" fill="#fff" stroke="#a13fb0" stroke-width="1.800"/><path d="M13 19l5-5" stroke="#a13fb0" stroke-width="1.500"/>',
  aeffect: '<path d="M5 21L12 3l7 18M8 15h8" fill="none" stroke="#2b7cd3" stroke-width="5"/><path d="M5 21L12 3l7 18M8 15h8" fill="none" stroke="#fff" stroke-width="1.500"/>',
  hl: '<path d="M2 18h20v6H2z" fill="#ff0"/><path d="M6 15l11-13 4 3-10 11zM6 15l-2 2h5" fill="#fff" stroke="#555" stroke-width="1.600"/>',
  acolor: '<path d="M2 18h20v6H2z" fill="#f00"/><path d="M6 15l6-14 6 14M8 10h8" fill="none" stroke="#444" stroke-width="1.600"/>',
  bullets: ln([[8, 4, 15], [8, 12, 15], [8, 20, 15]]) + '<path d="M1 2.500h3.500V6H1zM1 10.500h3.500V14H1zM1 18.500h3.500V22H1z" fill="#2b88d8"/>',
  numbers: ln([[8, 4, 15], [8, 12, 15], [8, 20, 15]]) + '<path d="M2.500 1v6M1 10h3l-3 4h3M1 17.500h3v5H1M2 20h2" fill="none" stroke="#2b88d8" stroke-width="1.300"/>',
  multi: ln([[6, 4, 15], [11, 12, 12], [16, 20, 7]]) + '<path d="M2.500 1v6M5 10h3v4H5v-2h3M12.500 18v5M12.500 16v1" fill="none" stroke="#2b88d8" stroke-width="1.300"/>',
  outdent: ln([[2, 3, 20], [12, 9, 10], [12, 15, 10], [2, 21, 20]]) + '<path d="M10 12H2M5 9l-3 3 3 3" fill="none" stroke="#2b88d8" stroke-width="1.500"/>',
  indent: ln([[2, 3, 20], [12, 9, 10], [12, 15, 10], [2, 21, 20]]) + '<path d="M1 12h8M6 9l3 3-3 3" fill="none" stroke="#2b88d8" stroke-width="1.500"/>',
  sortaz: '<path d="M2 10L6 1l4 9M3.500 7h5" fill="none" stroke="#2b88d8" stroke-width="1.600"/><path d="M3 14h6l-6 8h6M18 2v19M13 16l5 5 5-5" fill="none" stroke="#444" stroke-width="1.600"/>',
  aleft: ln([[2, 2, 20], [2, 8, 14], [2, 14, 20], [2, 20, 14]]),
  acenter: ln([[2, 2, 20], [5, 8, 14], [2, 14, 20], [5, 20, 14]]),
  aright: ln([[2, 2, 20], [8, 8, 14], [2, 14, 20], [8, 20, 14]]),
  ajust: ln([[2, 2, 20], [2, 8, 20], [2, 14, 20], [2, 20, 20]]),
  spacing: ln([[11, 3, 13], [11, 9, 13], [11, 15, 13], [11, 21, 13]]) + '<path d="M4.500 2v20M1 6l3.500-4L8 6M1 18l3.500 4L8 18" fill="none" stroke="#2b88d8" stroke-width="1.600"/>',
  fill: '<path d="M2 19h20v4H2z" fill="#fff" stroke="#888"/><path d="M5 10l7-8 7 7-8 7z" fill="#fff" stroke="#444" stroke-width="1.500"/><path d="M18 9c3 2 3 5 2 6" stroke="#2b88d8" stroke-width="2" fill="none"/>',
  borders: '<path d="M2 2h20v20H2z" fill="#fff" stroke="#222" stroke-width="1.600"/><path d="M12 4v16M4 12h16" stroke="#444" stroke-width="1.400" stroke-dasharray="1.500 1.500"/>',
  launcher: '<path d="M3 20V3h17M9 9l10 10M20 10v10H10" fill="none" stroke="#555" stroke-width="2.200"/>',
  replace: '<text x="8" y="11" font-size="14" font-weight="600" fill="#a13fb0" font-family="Open Sans">b</text><text x="15" y="24" font-size="14" font-weight="600" fill="#2b88d8" font-family="Open Sans">c</text><path d="M6 9c-6 3-5 8 5 9M8 14l4 4-4 4" fill="none" stroke="#2b88d8" stroke-width="1.700"/>',
  pointer: '<path d="M6 1l13 13h-7l3 7-3 1.500-3-7-4 4z" fill="#fff" stroke="#444" stroke-width="1.500"/>',
  mic: '<rect x="8" y="1" width="9" height="15" rx="4.500" fill="#83bdec" stroke="#2b6cb0"/><path d="M4 11c0 12 17 12 17 0M12.500 20v4" fill="none" stroke="#555" stroke-width="1.500"/>',
  editor: '<path d="M11 10h11M9 15h11M8 20h8" stroke="#185abd" stroke-width="3.500" stroke-linecap="round"/><path d="M2 22l3-8L14 1l4 2-9 14z" fill="#fff" stroke="#185abd" stroke-width="2"/>',
  proof: '<path d="M2 3h8v16H2zM10 3h8v6" fill="none" stroke="#555" stroke-width="1.600"/><path d="M12 12l8 10M20 12l-8 10" stroke="#555" stroke-width="1.600"/>',
  macro: '<path d="M3 3h17v9M3 3v18h8M3 7h17M6 11h6M6 15h4" fill="none" stroke="#555" stroke-width="1.600"/><circle cx="16" cy="17" r="5" fill="none" stroke="#555" stroke-width="2"/>',
  access: '<circle cx="12" cy="4" r="2.500" fill="none" stroke="#555" stroke-width="1.500"/><path d="M3 8l7 2v5l-4 8M21 8l-7 2v4M13 14l8 8M21 14l-8 8" fill="none" stroke="#555" stroke-width="1.700"/>',
  focus: '<path d="M2 7V2h4M18 2h4v5M2 17v5h4M18 22h4v-5M7 5h6l4 4v10H7z" fill="none" stroke="#555" stroke-width="1.600"/>',
  read: '<path d="M2 3h9l1 1 1-1h9v17h-9l-1 1-1-1H2zM12 4v16M5 7h4M5 11h4M5 15h4M15 7h4M15 11h4M15 15h4" fill="none" stroke="#555" stroke-width="1.500"/>',
  print: '<path d="M4 2h16v20H4zM7 6h10M7 9h10M7 12h10M7 15h10M7 18h10" fill="none" stroke="#333" stroke-width="1.500"/>',
  web: '<path d="M3 2h15v9M3 2v20h8M6 6h9M6 10h6M6 14h4" fill="none" stroke="#555" stroke-width="1.500"/><circle cx="16" cy="17" r="5.500" fill="#fff" stroke="#555" stroke-width="1.600"/><path d="M11 17h10M16 12v10" stroke="#555"/>',
  /* --- file dialog --- */
  back: '<path d="M22 12H3M10 4l-8 8 8 8" fill="none" stroke="#555" stroke-width="2"/>',
  fwd: '<path d="M2 12h19M14 4l8 8-8 8" fill="none" stroke="#ccc" stroke-width="2"/>',
  upa: '<path d="M12 22V3M4 11l8-8 8 8" fill="none" stroke="#555" stroke-width="2"/>',
  fy: folderY, thin: '<path d="M4 8l8 8 8-8" fill="none" stroke="#666" stroke-width="2.200"/>', thinup: '<path d="M3 16l9-9 9 9" fill="none" stroke="#555" stroke-width="2.200"/>',
  reload: '<path d="M6 6c-7 6-2 15 6 15 9 0 12-12 4-16M16 1v6h-6" fill="none" stroke="#666" stroke-width="2"/>',
  views: '<path d="M2 3h4v4H2zM2 10h4v4H2zM2 17h4v4H2z" fill="none" stroke="#888" stroke-width="1.400"/><path d="M9 5h5M9 12h5M9 19h5M17 5h5M17 12h5M17 19h5" stroke="#999" stroke-width="1.500"/>',
  help: '<circle cx="12" cy="12" r="11" fill="#0a5fc0"/><text x="12" y="18" font-size="17" font-weight="700" text-anchor="middle" fill="#fff" font-family="Open Sans">?</text>',
  pc: '<path d="M1 3h22v14H1z" fill="#2aa6ea"/><path d="M1 3h22L1 14z" fill="#7cd0f8"/><path d="M9 17h6v3H9zM4 20h16v2H4z" fill="#89a"/>',
  desk: '<path d="M1 3h22v17H1z" fill="#1e90e6"/><path d="M1 17h22v3H1z" fill="#1567b0"/>',
  docs: '<path d="M4 1h12l4 4v18H4z" fill="#fff" stroke="#888"/><path d="M7 6h5v6H7zM7 14h10v6H7z" fill="#6aa8dc"/>',
  dl: '<path d="M8 1h8v11h6L12 23 2 12h6z" fill="#2b88e0"/>',
  imgs: '<path d="M1 3h22v18H1z" fill="#fff" stroke="#999"/><path d="M3 5h18v14H3z" fill="#9fd0f4"/><path d="M3 19l7-8 5 5 6 1v2z" fill="#3b5a78"/>',
  music: '<path d="M10 1c1 6 10 6 8 14-1-4-4-5-6-5v8c0 7-9 5-7 0 1-2 4-2 5-1z" fill="#1e90e6"/>',
  obj: '<path d="M12 1l10 4v14l-10 4L2 19V5z" fill="#35b5c9"/><path d="M12 9L2 5v14l10 4z" fill="#7fdbe4"/>',
  vid: '<path d="M3 1h18v22H3z" fill="#333"/><path d="M7 2h10v9H7z" fill="#4f86d8"/><path d="M7 12h10v10H7z" fill="#d88030"/>',
  drive: '<path d="M2 14h20v7H2z" fill="#889"/><path d="M2 1h5v5H2zM8 1h5v5H8zM2 7h5v5H2zM8 7h5v5H8z" fill="#2aa6ea"/><path d="M15 16h5v3h-5z" fill="#4d4"/>',
  netdrive: '<path d="M1 8h22v9H1z" fill="#889"/><path d="M8 10l8 8M16 10l-8 8" stroke="#e11" stroke-width="3"/>'
};

/* ---------- small base for all elements ---------- */
const BASE = '*{box-sizing:border-box}button,input,select{font:inherit;color:inherit;margin:0;padding:0;border:0;background:none;border-radius:0}button{display:flex;align-items:center;justify-content:center;white-space:nowrap;flex:none}ul{list-style:none;margin:0;padding:0}';
const define = (tag, css, render) => customElements.define(tag, class extends HTMLElement {
  connectedCallback() {
    if (this.shadowRoot) return;
    this.attachShadow({ mode: 'open' }).innerHTML = `<style>${BASE}${css}</style>${typeof render === 'function' ? render(this) : render}`;
  }
});
const ic = (name, size = 24) => `<ui-icon name="${name}" size="${size}"></ui-icon>`;

define('ui-icon', ':host{display:inline-flex;flex:none}svg{display:block}', (el) => {
  const s = el.getAttribute('size') || 24;
  return `<svg width="${s}" height="${s}" viewBox="0 0 24 24" aria-hidden="true">${ICONS[el.getAttribute('name')] || ''}</svg>`;
});

/* ---------- QGIS ---------- */
define('menu-bar', ':host{display:flex;height:20px;background:#fff;color:#8c8c8c}button{padding:0 9px 0 8px}',
  () => 'Project,Edit,View,Layer,Settings,Plugins,Vector,Raster,Mesh,Processing,Help'.split(',').map(t => `<button>${t}</button>`).join(''));

define('tool-strip', `
  :host{display:flex;align-items:center;background:#f0f0f0;border-right:1px solid #b5b5b5;padding-left:10px;position:relative}
  :host([last]){border-right:0;flex:1}
  :host::before{content:"";position:absolute;left:4px;top:5px;bottom:5px;width:2px;background:repeating-linear-gradient(#b4b4b4 0 2px,transparent 2px 4px)}
  slot{display:contents}`, '<slot></slot>');

define('tool-button', `
  :host{display:block}
  button{width:31px;height:28px;border:1px solid transparent}
  :host([drop]) button{width:43px;padding-left:4px;gap:0}
  :host([on]) button{background:#c2def5;border-color:#90c8f6}
  .pale{opacity:.55}`, (el) => `<button aria-label="${el.getAttribute('icon')}">${ic(el.getAttribute('icon'))}${el.hasAttribute('drop') ? `<span class="${el.getAttribute('drop')}">${ic('tri', 14)}</span>` : ''}</button>`);

const tb = (names) => names.map(n => {
  const [name, flag] = n.split(':');
  return `<tool-button icon="${name}" ${flag === 'on' ? 'on' : flag ? `drop="${flag === 'p' ? 'pale' : 'full'}"` : ''}></tool-button>`;
}).join('');

define('dock-panel', `
  :host{display:flex;flex-direction:column;min-height:0}
  header{display:flex;align-items:center;height:25px;flex:none;background:#d9d9d9;border:1px solid #b9b9b9;padding:0 0 0 4px;font-size:11px}
  h2{font:inherit;margin:0;flex:1}
  button{width:22px;height:22px}`, (el) => `<header><h2>${el.getAttribute('heading')}</h2><button aria-label="Float">${ic('float', 15)}</button><button aria-label="Close">${ic('closex', 14)}</button></header><slot></slot>`);

define('tree-row', `
  :host{display:flex;align-items:center;height:20px;padding-left:var(--indent,0);white-space:nowrap}
  .c{width:22px;display:flex;justify-content:center;flex:none;padding-right:3px}
  ui-icon{flex:none}
  span.t{margin-left:6px}`, (el) => `<span class="c">${el.hasAttribute('leaf') ? '' : ic(el.hasAttribute('open') ? 'chevopen' : 'chev', 10)}</span>${ic(el.getAttribute('icon'), 16)}<span class="t"><slot></slot></span>`);

define('provider-bar', `
  :host{display:flex;flex-direction:column;width:47px;background:#f0f0f0;border-right:1px solid #b9b9b9;padding-top:9px;position:relative}
  :host::before{content:"";position:absolute;top:4px;left:4px;right:4px;height:2px;background:repeating-linear-gradient(90deg,#b4b4b4 0 2px,transparent 2px 4px)}
  button{width:46px;height:30px;justify-content:flex-start;padding-left:5px}
  i{margin-left:2px;display:flex}`, () => 'addvec,addras,addmesh,addcsv,addlite,addvirt,addpg:d,addwms:d,addwcs,addwfs:d,newvec:d'.split(',').map(n => {
    const [name, d] = n.split(':');
    return `<button aria-label="${name}">${ic(name)}${d ? `<i>${ic('tri', 14)}</i>` : ''}</button>`;
  }).join(''));

define('small-tools', ':host{display:flex;align-items:center;height:28px;flex:none;padding-left:1px}button{width:23px;height:24px}button.w{width:35px;justify-content:space-around}i{width:1px;height:14px;background:#c4c4c4;margin:0 2px 0 3px}',
  (el) => el.getAttribute('icons').split(',').map(n => n === '|' ? '<i></i>' : n.endsWith(':d') ? `<button class="w" aria-label="filter">${ic(n.slice(0, -2), 16)}<span style="display:flex;opacity:.7">${ic('tri', 12)}</span></button>` : `<button aria-label="${n}">${ic(n, 16)}</button>`).join(''));

define('layers-dock', ':host{display:block}.list{height:326px;background:#fff;border:1px solid #828790}',
  `<dock-panel heading="Layers"><small-tools icons="style,group,eye,filter,filterexp:d,expand,collapse,rmlayer"></small-tools><div class="list"></div></dock-panel>`);

define('aequilibrae-dock', `
  :host{display:flex;flex-direction:column;flex:1;min-height:0;margin-top:5px;font-size:10px}
  dock-panel{flex:1}
  ul{padding:5px 0 0 7px}
  li{height:19px;display:flex;align-items:center}
  li button{gap:0}
  i{width:0;height:0;border:2px solid transparent;border-top:3px solid #000;border-bottom:0;margin:7px 0 0 -1px}
  label{display:flex;align-items:center;gap:5px;height:17px;padding-left:1px;flex:none}
  input{appearance:none;width:13px;height:13px;border:1px solid #333;background:#fff}
  .box{position:relative;display:flex}
  .box svg{position:absolute;left:2px;top:3px}
  .info{flex:1;width:125px;background:#fff;border-top:2px solid #d4d4d4;margin:1px 0 3px 1px}`, () => {
  const items = ['Project:d', 'Network Manipulation:d', 'Data:d', 'Trip Distribution', 'Paths and assignment:d', 'Public Transport:d', 'GIS:d', 'Parameters', 'About', 'logfile', 'Help'];
  return `<dock-panel heading="AequilibraE"><ul>${items.map(t => `<li><button>${t.replace(':d', '')}${t.endsWith(':d') ? '<i></i>' : ''}</button></li>`).join('')}</ul>
  <label><span class="box"><input type="checkbox" checked><svg width="9" height="7" viewBox="0 0 9 7"><path d="M0 3l3 3 6-6" fill="none" stroke="#222"/></svg></span>Show project info</label><div class="info"></div></dock-panel>`;
});

define('toolbox-dock', `
  :host{display:flex;width:327px;min-height:0}
  dock-panel{flex:1}
  .search{display:flex;align-items:center;height:20px;border:1px solid #828790;background:#fff;padding-left:8px;gap:7px;flex:none}
  input{flex:1;outline:0}input::placeholder{color:#8a8a8a;opacity:1}
  ul{flex:1;background:#fff;border:1px solid #828790;border-top-width:1px;overflow:hidden}`, () => {
  const q = 'Cartography,Database,File tools,Interpolation,Layer tools,Mesh,Network analysis,Plots,Raster analysis,Raster creation,Raster terrain analysis,Raster tools,Vector analysis,Vector creation,Vector general,Vector geometry,Vector overlay,Vector selection,Vector table,Vector tiles'.split(',').map(t => ['qgis', t]);
  const rest = [['gdal', 'GDAL'], ['gnm', 'GDAL GNM'], ['grass', 'GRASS'], ['models', 'Models'], ['otb', 'OTB'], ['saga', 'SAGA'], ['python', 'Scripts'], ['tau', 'TauDEM'], ['wna', 'Water Net Analyzer'], ['gearblue', 'Water Network Tools'], ['wbt', 'WhiteboxTools']];
  return `<dock-panel heading="Processing Toolbox"><small-tools icons="models,python,clockpale,doc,|,editm,|,wrench"></small-tools>
  <label class="search">${ic('searchr', 12)}<input type="text" placeholder="Search…" aria-label="Search"></label>
  <ul>${[['clockpale', 'Recently used'], ...q, ...rest].map(([i, t]) => `<li><tree-row icon="${i}">${t}</tree-row></li>`).join('')}</ul></dock-panel>`;
});

define('browser-window', `
  :host{display:flex;flex-direction:column;width:346px;height:401px;background:#f0f0f0;box-shadow:0 2px 14px rgba(0,0,0,.45);position:relative}
  header{display:flex;align-items:center;height:31px;background:#27a5f3;padding:0 1px 0 8px;flex:none}
  h2{font:inherit;margin:0;flex:1}
  header button{width:19px;height:19px;background:#c75050;color:#fff;font-weight:700;font-size:10px}
  small-tools{height:26px}
  .view{display:flex;flex:1;min-height:0;border:1px solid #828790;background:#fff}
  ul{flex:1;overflow:hidden;min-width:0}
  .kid{--indent:20px}
  .sel{background:linear-gradient(#cce8ff,#cce8ff) 22px 0/250px 100% no-repeat;position:relative}
  .sel::after{content:"";position:absolute;left:22px;top:0;width:250px;bottom:0;border:1px dotted #333}
  .bar{width:16px;background:#f0f0f0;display:flex;flex-direction:column;align-items:center;justify-content:space-between;padding:4px 0}
  .bar b{width:16px;height:194px;background:#cdcdcd;margin-bottom:auto;margin-top:4px}
  .menu{position:absolute;left:78px;top:68px;width:150px;height:28px;padding:2px;background:#f2f2f2;border:1px solid #ccc;box-shadow:3px 3px 3px rgba(0,0,0,.5)}
  .menu button{width:100%;height:100%;background:#91c9f7;padding-left:8px}`, () => {
  const rows = [['starfav', 'Favorites', 'open', 'sel'], ['folderlink', 'C:\\CompPlex3\\complexidade3\\Examples', '', 'kid'], ['sbm', 'Spatial Bookmarks'], ['projhome', 'Project Home'], ['folderhome', 'Home'], ['folder', 'C:\\'], ['folder', 'D:\\'], ['folder', 'W:\\'], ['folder', 'X:\\'], ['folder', 'Y:\\'], ['folderlink', 'Z:\\', 'leaf'], ['gpkg', 'GeoPackage', 'open'], ['db', 'sf.gpkg', '', 'kid'], ['lite', 'SpatiaLite', 'leaf'], ['pg', 'PostGIS'], ['mssql', 'MSSQL'], ['oracle', 'Oracle'], ['bluebox', '', 'leaf']];
  return `<header><h2>Browser</h2><button aria-label="Close">x</button></header><small-tools icons="addlayer,refresh,filter,collapse,info"></small-tools>
  <div class="view"><ul>${rows.map(([i, t, f = '', c = '']) => `<li class="${c}"><tree-row icon="${i}" ${f}>${t}</tree-row></li>`).join('')}</ul><div class="bar">${ic('up', 9)}<b></b>${ic('down', 9)}</div></div>
  <div class="menu"><button>Add a Directory...</button></div>`;
});

define('qgis-status', `
  :host{display:flex;align-items:center;height:27px;background:#f0f0f0;padding:0 7px 0 4px;white-space:nowrap;font-size:10px}
  .f{display:flex;align-items:center;height:20px;border:1px solid #7a7a7a;background:#fff;padding:0 4px;flex:none}
  input,select{width:100%;min-width:0;outline:0;appearance:none}
  input::placeholder{color:#8a8a8a;opacity:1}
  label{display:flex;align-items:center;flex:none}
  .locate{width:200px;gap:6px;padding-left:6px;font-size:11px}
  .spin{padding-right:1px}
  .spin i{width:14px;height:17px;flex:none;background:#ececec;border:1px solid #999;display:flex;flex-direction:column;align-items:center;justify-content:space-evenly}
  .spin i::before{content:"";border:3px solid transparent;border-bottom:4px solid #222;border-top:0}
  .spin i::after{content:"";border:3px solid transparent;border-top:4px solid #222;border-bottom:0}
  .box{position:relative;display:flex;margin-right:5px}.box input{width:13px;height:13px;border:1px solid #333;background:#fff}.box svg{position:absolute;left:2px;top:3px}`, `
  <label class="f locate">${ic('searchr', 13)}<input type="text" placeholder="Type to locate (Ctrl+K)" aria-label="Locate"></label>
  <label style="margin-left:auto">Coordinate<span class="f" style="width:107px;margin:0 3px 0 5px"><input type="text" value="-47.0370,-21.5632"></span></label>${ic('mouse', 16)}
  <label style="margin-left:13px">Scale<span class="f" style="width:79px;margin:0 9px 0 5px"><select><option>1:96782</option></select>${ic('down', 8)}</span></label>${ic('lock', 16)}
  <label style="margin-left:6px">Magnifier<span class="f spin" style="width:82px;margin:0 9px 0 4px"><input type="text" value="100%"><i></i></span></label>
  <label>Rotation<span class="f spin" style="width:79px;margin:0 7px 0 8px"><input type="text" value="0.0 °"><i></i></span></label>
  <label style="width:70px"><span class="box"><input type="checkbox" checked><svg width="9" height="7" viewBox="0 0 9 7"><path d="M0 3l3 3 6-6" fill="none" stroke="#222"/></svg></span>Render</label>
  ${ic('globe', 16)}<button style="margin:0 16px 0 3px">EPSG:4326</button>${ic('bubble', 17)}`);

define('qgis-window', `
  :host{display:flex;flex-direction:column;background:#f0f0f0;min-width:0;min-height:0;position:relative}
  .title{display:flex;align-items:center;height:24px;background:#fff;color:#7d7d7d;padding-left:2px;gap:6px}
  .row{display:flex;border-bottom:2px solid #b5b5b5;height:35px;align-items:stretch}
  .row.first{border-top:1px solid #e0e0e0}
  .row.gap{height:11px;border-bottom-width:1px}
  main{flex:1;display:flex;min-height:0}
  .left{width:346px;display:flex;flex-direction:column}
  .canvas{flex:1;margin:0 5px 0 4px;background:#fff;border:1px solid #828790}
  .cp{display:flex;align-items:center;gap:7px;padding-left:3px;font-size:10px}
  .cp span{margin-left:-4px}
  .cp button{width:24px;height:24px}
  browser-window{position:absolute;left:644px;top:241px}`, `
  <div class="title">${ic('qgis', 16)}<span>EX_CompPlex — QGIS</span></div>
  <menu-bar></menu-bar>
  <div class="row first">
    <tool-strip>${tb('hand:on,panmap,zoomin,zoomout,zoomfull,zoomsel,zoomlay,zoomnat,zoomlast,zoomnext,newmap,map3d,bookmark,newbm,clock,refresh'.split(','))}</tool-strip>
    <tool-strip>${tb('identify,attr,abacus,gearblue:on,sigma,ruler:d,tip,gearrun:p,text:d'.split(','))}</tool-strip>
    <tool-strip style="padding-right:113px">${tb('select:p,expr:p,desel:d,selloc'.split(','))}</tool-strip>
    <tool-strip>${tb('pythoncon,hammer,undo:d,rgis,tc'.split(','))}</tool-strip>
    <tool-strip last>${tb(['book'])}</tool-strip>
  </div>
  <div class="row gap"><tool-strip last></tool-strip></div>
  <div class="row"><tool-strip last><div class="cp"><button aria-label="CompPlex">${ic('drop')}</button><span>CompPlex Tools:</span><button aria-label="Tool 1">${ic('flower1')}</button><button aria-label="Tool 2">${ic('flower2')}</button><button aria-label="Tool 3">${ic('flower3')}</button></div></tool-strip></div>
  <main><provider-bar></provider-bar><div class="left"><layers-dock></layers-dock><aequilibrae-dock></aequilibrae-dock></div><div class="canvas"></div><toolbox-dock></toolbox-dock></main>
  <qgis-status></qgis-status>
  <browser-window></browser-window>`);

/* ---------- taskbar ---------- */
define('task-button', `
  :host{display:block;flex:none}
  button{height:40px;width:40px;border-bottom:2px solid transparent}
  button.wide{width:77px;justify-content:flex-start;padding-left:4px;gap:4px;font-size:11px;background:linear-gradient(#279ff0,#279ff0) 3px 100%/70px 2px no-repeat;border:0}
  button.run{background:linear-gradient(#279ff0,#279ff0) 0 100%/100% 2px no-repeat;border:0}
  :host([on]) button{background-color:#fafafa}`, (el) => {
  const t = el.textContent;
  return `<button class="${t ? 'wide' : el.hasAttribute('run') ? 'run' : ''}" aria-label="${t || el.getAttribute('icon')}">${ic(el.getAttribute('icon'), 24)}${t ? '<span><slot></slot></span>' : ''}</button>`;
});

define('task-bar', `
  :host{display:flex;align-items:center;height:40px;background:#eee;overflow:hidden;min-width:0}
  .b{width:48px;height:40px}
  .find{display:flex;align-items:center;width:344px;flex:none;height:40px;background:#fff;border:1px solid #ccc;padding-left:11px;gap:12px;font-size:14px}
  .find input{flex:1;outline:0}.find input::placeholder{color:#333;opacity:1}
  .pins{display:flex;gap:1px;margin-left:2px;flex:none}
  .pins.far{gap:9px;margin-left:7px}
  .tray{margin-left:auto;display:flex;align-items:center;gap:8px;flex:none}
  .clock{text-align:center;line-height:19px;font-size:11px;margin:0 10px 0 4px;white-space:nowrap}
  .tray.far .clock{text-align:right;margin:0 8px 0 0}
  .end{width:6px;height:40px;border-left:1px solid #ccc;margin-left:9px}`, (el) => {
  const pin = (s) => s.split(',').map(x => { const [n, t, f] = x.split(':'); return `<task-button icon="${n}" ${t === 'run' ? 'run' : ''} ${f ? 'on' : ''}>${t && t !== 'run' ? t : ''}</task-button>`; }).join('');
  if (el.hasAttribute('second')) return `<button class="b" aria-label="Start">${ic('win', 18)}</button><button class="b" aria-label="Search">${ic('search', 18)}</button><button class="b" aria-label="Cortana">${ic('cortana', 19)}</button><button class="b" aria-label="Task view">${ic('taskview', 17)}</button>
    <div class="pins far">${pin('cpl,store,mail,calc,firefox,explorer:run,edge,outlook,chrome:run,pys:run,cmd:run,micro:run,ppt:run,snip:run,word:run,qgis:run:on,magnify:run')}</div><div class="tray far"><div class="clock"><div>11:59 AM</div><div>3/1/2022</div></div></div>`;
  return `<button class="b" aria-label="Start">${ic('win', 18)}</button><label class="find">${ic('search', 17)}<input type="text" placeholder="Digite aqui para pesquisar" aria-label="Pesquisar"></label><button class="b" aria-label="Cortana">${ic('cortana', 19)}</button><button class="b" aria-label="Task view">${ic('taskview', 17)}</button>
    <div class="pins">${pin('cpl,store,mail,calc,firefox,folderw:Curs...,edge,outlook')}</div><div class="pins" style="gap:0">${pin('chrome:icon...,pys:PySc...,adm:Adm...,fiji:(Fiji I...,ppt:Apre...,snip:Ferra...,word:Com...,word:Com...,word:H&amp;...,qgis:EX_C...:on,magnify:Untit...')}</div>
    <div class="tray">${ic('caretup', 15)}${ic('meet', 16)}${ic('net', 16)}${ic('vol', 16)}<div class="clock"><div>11:59 AM</div><div>3/1/2022</div></div>${ic('note', 18)}<div class="end"></div></div>`;
});

/* ---------- Word ---------- */
define('word-title', `
  :host{display:flex;align-items:center;height:34px;background:#2b579a;color:#b3c6e2;position:relative;overflow:hidden}
  .deco{position:absolute;right:0;top:0}
  .l{display:flex;align-items:center;flex:1;padding-left:20px;position:relative}
  .tog{width:38px;height:16px;border:1px solid #fff;border-radius:8px;margin:0 12px 0 7px;justify-content:flex-start;padding-left:3px}
  .tog::before{content:"";width:9px;height:9px;border-radius:5px;background:#fff}
  .q{width:20px;height:24px}.a{width:14px;height:24px}.dim{opacity:.35}
  .name{margin-left:175px;gap:6px}
  .find{display:flex;align-items:center;width:366px;height:22px;background:#a6b9d3;color:#2b579a;padding-left:19px;gap:15px}
  .find input{outline:0;flex:1}.find input::placeholder{color:#2b579a;opacity:1}
  .r{display:flex;align-items:center;justify-content:flex-end;flex:1;position:relative}
  .r button{width:46px;height:34px;color:#c5d4ea}
  .r ui-icon{color:#c5d4ea}`, `
  <svg class="deco" width="500" height="34" viewBox="0 0 500 34" fill="none" stroke="#1f4a85" stroke-width="3"><circle cx="14" cy="14" r="4"/><path d="M18 14h130l10 4h40l30 30M80 31h100l10 8"/><circle cx="32" cy="38" r="17" stroke-width="5"/><circle cx="77" cy="33" r="4"/><circle cx="285" cy="17" r="26" stroke-width="7"/><path d="M270 32l20-20M272 10h20v20" stroke-width="7"/><path d="M390 34l8-10h60l22-30M430 40l50-50M455 40l50-50"/></svg>
  <div class="l"><span>Salvamento Automático</span><button class="tog" aria-label="Salvamento Automático"></button><button class="q" aria-label="Salvar">${ic('save', 16)}</button><button class="q" style="margin-left:9px" aria-label="Desfazer">${ic('wundo', 17)}</button><button class="a" aria-label="Mais">${ic('wdown', 8)}</button><button class="q" style="margin-left:3px" aria-label="Refazer">${ic('wredo', 17)}</button><button class="q dim" style="margin-left:7px" aria-label="Tema">${ic('palette', 17)}</button><button class="a dim" aria-label="Mais">${ic('wdown', 8)}</button><button class="a" style="margin-left:9px" aria-label="Personalizar">${ic('qat', 12)}</button><button class="name">CompPlex.docx ${ic('wdown', 8)}</button></div>
  <label class="find">${ic('search', 15)}<input type="text" placeholder="Pesquisar (Alt+G)" aria-label="Pesquisar"></label>
  <div class="r"><span style="margin-right:11px">Claudio Bielenki Jr</span>${ic('avatar', 24)}<span style="width:12px"></span><button aria-label="Caneta">${ic('wpen', 17)}</button><button aria-label="Faixa de opções">${ic('wopt', 15)}</button><button aria-label="Minimizar">${ic('wmin', 13)}</button><button aria-label="Restaurar">${ic('wmax', 13)}</button><button aria-label="Fechar">${ic('wclose', 13)}</button></div>`);

define('ribbon-tabs', `
  :host{display:flex;align-items:center;height:34px;background:#f3f2f1;color:#444;padding:0 13px 0 14px;font-size:12px}
  nav{display:flex;gap:30px;flex:1}
  nav button{height:25px;padding-bottom:1px;border-bottom:3px solid transparent}
  nav button.on{font-weight:600;border-color:#2b579a}
  .act{background:#fff;border:1px solid #e1dfdd;border-radius:2px;height:26px;padding:0 9px 0 7px;gap:5px;color:#2b579a;font-weight:600;margin-left:9px}`, () => `
  <nav>${'Arquivo,Página Inicial,Inserir,Design,Layout,Referências,Correspondências,Revisão,Exibir,Ajuda'.split(',').map((t, i) => `<button class="${i === 1 ? 'on' : ''}">${t}</button>`).join('')}</nav>
  <button class="act">${ic('comment', 12)}Comentários</button><button class="act">${ic('share', 13)}Compartilhar</button>`);

define('ribbon-group', `
  :host{display:flex;flex-direction:column;position:relative;height:92px;color:#444;border-right:1px solid #c3c1bf}
  .body{height:76px;flex:none}
  footer{display:flex;align-items:center;height:16px;justify-content:center;position:relative;padding-right:var(--fp,0)}
  footer button{position:absolute;right:5px}`, (el) => `<div class="body"><slot></slot></div><footer>${el.getAttribute('label')}${el.hasAttribute('more') ? `<button aria-label="Mais opções">${ic('launcher', 9)}</button>` : ''}</footer>`);

define('rib-btn', `
  :host{display:block;color:#444}
  button{width:24px;height:24px;border:1px solid transparent}
  :host([drop]) button{width:39px;gap:6px;padding-left:2px}
  :host([on]) button{background:#d2d0ce;border-color:#979593;width:22px}`, (el) => `<button aria-label="${el.getAttribute('label') || el.getAttribute('icon')}">${el.getAttribute('icon') ? ic(el.getAttribute('icon'), 17) : '<slot></slot>'}${el.hasAttribute('drop') ? ic('wdown', 7) : ''}</button>`);

define('style-card', `
  :host{display:block}
  button{flex-direction:column;justify-content:flex-start;width:72px;height:57px;padding:0 7px;overflow:hidden}
  :host([on]) button{box-shadow:inset 0 0 0 1px #979593,inset 0 0 0 4px #d2d0ce}
  .s{height:38px;width:58px;line-height:44px;overflow:hidden;text-align:left;color:#000;font-family:Lato,sans-serif;font-size:13px}
  .n{font-size:11px;line-height:15px;color:#666}`, (el) => `<button><span class="s" style="${el.getAttribute('look')}">${el.getAttribute('sample') || 'AaBbCcDc'}</span><span class="n"><slot></slot></span></button>`);

define('word-ribbon', `
  :host{display:flex;height:92px;background:#f3f2f1;border-bottom:1px solid #d2d0ce;position:relative;color:#444;box-shadow:0 1px 2px rgba(0,0,0,.15)}
  .clip{display:flex;width:199px;padding:2px 0 0 14px;gap:5px}
  .paste{flex-direction:column;justify-content:flex-start;width:30px;gap:2px}
  .stack{display:flex;flex-direction:column;gap:4px;padding-left:3px}
  .stack button{height:20px;gap:4px;justify-content:flex-start}
  .off{color:#b1afad}
  .rows{padding:8px 7px 0 7px;display:flex;flex-direction:column;gap:8px}
  .row{display:flex;align-items:center;height:24px}
  .row>i{width:1px;height:24px;background:#d2d0ce;margin:0 2px}
  .combo{display:flex;align-items:center;height:22px;border:1px solid #c8c6c4;background:#fff;padding:0 3px;color:#222;margin:0 2px 0 1px}
  select{appearance:none;flex:1;min-width:0;outline:0}
  .gal{display:flex;width:882px;height:60px;margin:2px 9px 0 9px;border:1px solid #c8c6c4;background:#fff;padding:1px 0 0 1px}
  .sb{margin-left:auto;width:15px;display:flex;flex-direction:column;margin-top:-1px}
  .sb button{flex:1;border:1px solid #c8c6c4;border-width:0 0 1px 1px;background:#f3f2f1;width:15px}
  .edit{padding:1px 0 0 12px;width:110px;display:flex;flex-direction:column;gap:3px}
  .edit button{height:20px;gap:4px;justify-content:flex-start}
  .big{flex-direction:column;width:57px;height:62px;gap:5px;padding-top:3px;justify-content:flex-start}
  .coll{margin-left:auto;align-self:flex-end;width:28px;height:16px}`, () => {
  const card = (t, look = '', s = '', on = '') => `<style-card look="${look}" ${s ? `sample="${s}"` : ''} ${on}>${t}</style-card>`;
  return `
  <ribbon-group label="Área de Transferência" more style="--fp:20px"><div class="clip"><button class="paste">${ic('paste', 34)}Colar${ic('wdown', 7)}</button><div class="stack"><button class="off">${ic('cut', 16)}Recortar</button><button class="off">${ic('copy', 16)}Copiar</button><button>${ic('brush', 16)}Pincel de Formatação</button></div></div></ribbon-group>
  <ribbon-group label="Fonte" more style="width:297px;--fp:8px"><div class="rows">
    <div class="row"><label class="combo" style="width:93px"><select aria-label="Fonte"><option>Times New Ro</option></select>${ic('wdown', 7)}</label><label class="combo" style="width:60px"><select aria-label="Tamanho"><option>11</option></select>${ic('wdown', 7)}</label><rib-btn icon="agrow"></rib-btn><rib-btn icon="ashrink"></rib-btn><i></i><rib-btn drop label="Aa">Aa</rib-btn><i></i><rib-btn icon="aclear"></rib-btn></div>
    <div class="row"><rib-btn label="Negrito"><b style="font-size:13px">N</b></rib-btn><rib-btn label="Itálico"><em style="font-family:'Liberation Serif';font-size:14px">I</em></rib-btn><rib-btn drop label="Sublinhado"><u>S</u></rib-btn><rib-btn label="Tachado"><s>ab</s></rib-btn><rib-btn label="Subscrito"><b>x<span style="color:#2b88d8;font-size:8px;vertical-align:sub">2</span></b></rib-btn><rib-btn label="Sobrescrito"><b>x<span style="color:#2b88d8;font-size:8px;vertical-align:super">2</span></b></rib-btn><i></i><rib-btn drop icon="aeffect"></rib-btn><rib-btn drop icon="hl"></rib-btn><rib-btn drop icon="acolor"></rib-btn></div></div></ribbon-group>
  <ribbon-group label="Parágrafo" more style="width:247px;--fp:12px"><div class="rows">
    <div class="row"><rib-btn drop icon="bullets"></rib-btn><rib-btn drop icon="numbers"></rib-btn><rib-btn drop icon="multi"></rib-btn><i></i><rib-btn icon="outdent"></rib-btn><rib-btn icon="indent"></rib-btn><i></i><rib-btn icon="sortaz"></rib-btn><i></i><rib-btn on label="Marcas"><span style="font-size:15px">¶</span></rib-btn></div>
    <div class="row"><rib-btn icon="aleft"></rib-btn><rib-btn icon="acenter"></rib-btn><rib-btn icon="aright"></rib-btn><rib-btn on icon="ajust"></rib-btn><i></i><rib-btn drop icon="spacing"></rib-btn><i></i><rib-btn drop icon="fill"></rib-btn><rib-btn drop icon="borders"></rib-btn></div></div></ribbon-group>
  <ribbon-group label="Estilos" more style="--fp:20px"><div class="gal">
    ${card('¶ Normal', '', '', 'on')}${card('¶ Sem Esp...')}${card('Título 1', 'color:#2f5496;font-size:16px')}${card('Título 2', 'color:#2f5496;font-size:14px')}${card('Título', 'font-weight:300;font-size:31px;line-height:38px', 'AaB')}${card('Subtítulo', 'color:#5a5a5a')}${card('Ênfase Sutil', 'font-style:italic;color:#404040')}${card('Ênfase', 'font-style:italic')}${card('Ênfase Int...', 'font-style:italic;color:#4472c4')}${card('Forte', 'font-weight:700')}${card('Citação', 'font-style:italic;color:#404040')}${card('Citação In...', 'font-style:italic;color:#4472c4;border-top:1px solid #4472c4;border-bottom:1px solid #4472c4;height:20px;line-height:18px;margin:13px 0 5px')}
    <div class="sb"><button aria-label="Acima" style="opacity:.6">${ic('up', 6)}</button><button aria-label="Abaixo">${ic('down', 6)}</button><button aria-label="Mais">${ic('qat', 10)}</button></div></div></ribbon-group>
  <ribbon-group label="Editando"><div class="edit"><button>${ic('search', 16)}Localizar<span style="width:5px"></span>${ic('wdown', 7)}</button><button>${ic('replace', 16)}Substituir</button><button>${ic('pointer', 16)}Selecionar${ic('wdown', 7)}</button></div></ribbon-group>
  <ribbon-group label="Voz"><button class="big">${ic('mic', 32)}Ditar</button></ribbon-group>
  <ribbon-group label="Editor"><button class="big">${ic('editor', 32)}Editor</button></ribbon-group>
  <button class="coll" aria-label="Recolher">${ic('caretup', 11)}</button>`;
});

const slot = (k, n, half) => `<span style="flex:${half ? 1 : 2}">${n !== null ? n : `<i class="${k % 2 ? 'd' : 'h'}"></i>`}</span>`;
define('h-ruler', `
  :host{display:flex;height:25px;background:#e6e6e6;padding-right:10px;align-items:center;position:relative}
  .sel{width:14px;height:14px;margin-left:4px;background:#fff;border:1px solid #c8c8c8;justify-content:center}
  .wrap{flex:1;display:flex;justify-content:center;padding-right:2px}
  .strip{display:flex;width:1587px;height:10px;background:linear-gradient(90deg,#c6c6c6 14.3%,#fff 14.3% 85.7%,#c6c6c6 85.7%);font-size:8px;line-height:10px;color:#444;position:relative}
  span{display:flex;align-items:center;justify-content:center;min-width:0;width:0}
  .h{width:1px;height:5px;background:#555}.d{width:1px;height:2px;background:#555}
  svg{position:absolute;left:0;top:-4px}`, () => {
  let out = '';
  for (let k = 0; k <= 84; k++) {
    const v = Math.abs(k / 4 - 3);
    out += slot(k, k % 4 === 0 ? ([0, 15, 18].includes(v) && k > 0 ? '' : v) : null, k === 0 || k === 84);
  }
  return `<button class="sel" aria-label="Tabulação"><svg style="position:static" width="6" height="6"><path d="M1 0v5h5" fill="none" stroke="#555" stroke-width="2"/></svg></button><div class="wrap"><div class="strip">${out}
  <svg width="1587" height="24" viewBox="0 0 1587 24" fill="#fff" stroke="#777"><path d="M222.500 16.500v-4l4-4 4 4v4zM222.500 17.500h8v5h-8zM298.500 1.500h8v4l-4 4-4-4zM1356.500 16.500v-4l4-4 4 4v4z"/></svg></div></div>`;
});
define('v-ruler', `
  :host{display:flex;flex-direction:column;width:12px;margin:0 0 0 4px;padding-top:2px;background:#fff;font-size:8px;color:#444;flex:none}
  span{display:flex;align-items:center;justify-content:center;min-height:0}
  b{font-weight:400;writing-mode:vertical-rl;transform:rotate(180deg);line-height:12px}
  .h{height:1px;width:5px;background:#555}.d{height:1px;width:2px;background:#555}`, () => {
  let out = '';
  for (let k = 0; k < 44; k++) out += slot(k + 1, (k - 1) % 4 === 0 ? `<b>${7 + (k - 1) / 4}</b>` : null);
  return out;
});

define('save-dialog', `
  :host{display:flex;flex-direction:column;width:805px;height:453px;border:1px solid #27a5f3;background:#fff;font-family:"Open Sans",sans-serif;font-size:10px;line-height:14px;color:#1a1a1a;white-space:nowrap}
  header{display:flex;align-items:center;height:26px;background:#27a5f3;padding:0 4px 0 5px;gap:5px;flex:none}
  h2{font:inherit;margin:0;flex:1}
  header button{width:18px;height:18px}
  .nav{display:flex;align-items:center;height:36px;padding:0 10px 0 8px;flex:none}
  .nav>button{width:21px;height:20px}
  .addr{display:flex;align-items:center;flex:1;height:26px;border:1px solid #d9d9d9;margin:0 10px 0 0}
  .addr button{margin:0 8px 0 8px;height:24px}
  .addr .re{border-left:1px solid #d9d9d9;width:28px;margin:0}
  .find{display:flex;align-items:center;width:172px;height:26px;border:1px solid #d9d9d9;padding-left:11px;gap:12px;color:#777}
  .find input{flex:1;min-width:0;outline:0}.find input::placeholder{color:#6d6d6d;opacity:1}
  .tools{display:flex;align-items:center;height:26px;background:#f5f6f7;border-bottom:1px solid #e8e8e8;padding:0 12px 0 15px;color:#1e3287;flex:none}
  .mid{display:flex;flex:1;min-height:0;background:#fff}
  .side{width:119px;overflow:hidden;padding-top:1px;flex:none}
  .side li{display:flex;align-items:center;height:20px;gap:4px;padding-left:25px}
  .side li.root{padding-left:18px;margin-top:8px}
  .side li.on{background:#d9d9d9}
  .bar{width:13px;background:#f0f0f0;display:flex;flex-direction:column;align-items:center;justify-content:space-between;padding:6px 0 3px}
  .bar b{width:13px;height:108px;background:#cdcdcd;margin-top:83px}
  .files{flex:1;padding:0 10px 0 12px;position:relative}
  table{border-collapse:collapse;table-layout:fixed;width:516px}
  th{font-weight:400;text-align:left;height:22px;padding:2px 0 0 5px;color:#4c607a;border-right:1px solid #e5e5e5}
  td{height:26px;padding:0 0 0 5px;color:#6d6d6d}
  td span{display:flex;align-items:center;gap:4px;color:#1a1a1a}
  .sort{position:absolute;left:121px;top:-2px}
  .bot{height:100px;background:#f0f0f0;flex:none;display:flex;flex-direction:column;padding:9px 4px 0 0}
  .bot label{display:flex;align-items:center;height:20px;margin-bottom:1px}
  .bot label>span:first-child{width:102px;text-align:right;margin-right:4px}
  .fld{flex:1;display:flex;align-items:center;height:20px;border:1px solid #0078d7;background:#fff;padding:0 4px}
  .fld input,.fld select{flex:1;outline:0;appearance:none}
  .fld.g{border-color:#adadad;background:#e1e1e1;padding-left:2px}
  .act{display:flex;align-items:center;margin:17px 11px 0 11px;gap:11px}
  .act .ok,.act .no{width:74px;height:20px;background:#e1e1e1;border:1px solid #adadad}
  .act .ok{border:2px solid #0078d7}
  .act .hide{margin-right:auto;gap:6px}`, () => {
  const side = [['fy', 'complexidade'], ['fy', 'Dados_Andrea'], ['fy', 'fig'], ['pc', 'Este Computador', 'root'], ['desk', 'Área de Trabalho'], ['docs', 'Documentos'], ['dl', 'Downloads'], ['imgs', 'Imagens'], ['music', 'Músicas'], ['obj', 'Objetos 3D'], ['vid', 'Vídeos'], ['drive', 'Windows (C:)', 'on'], ['netdrive', 'C (\\\\notebook) (']];
  return `
  <header>${ic('qgis', 13)}<h2>Choose a QGIS project file</h2><button aria-label="Fechar">${ic('wclose', 10)}</button></header>
  <div class="nav"><button style="width:18px" aria-label="Voltar">${ic('back', 11)}</button><button style="margin-left:5px" aria-label="Avançar">${ic('fwd', 11)}</button><button style="width:18px" aria-label="Recentes">${ic('thin', 7)}</button><button aria-label="Acima">${ic('upa', 11)}</button>
    <div class="addr">${ic('fy', 15)}<span style="margin-left:5px">›</span>${['Este Computador', 'Windows (C:)', 'Complex3', 'complexidade', 'Examples'].map(t => `<button>${t}</button><span>›</span>`).join('')}<span style="flex:1"></span>${ic('thin', 9)}<span style="width:8px"></span><button class="re" aria-label="Atualizar">${ic('reload', 11)}</button></div>
    <label class="find">${ic('search', 11)}<input type="text" placeholder="Pesquisar Examples" aria-label="Pesquisar Examples"></label></div>
  <div class="tools"><button>Organizar${ic('tri', 12)}</button><button style="margin-left:22px">Nova pasta</button><span style="flex:1"></span><button aria-label="Exibição">${ic('views', 14)}<span style="width:5px"></span>${ic('tri', 13)}</button><button style="margin-left:22px" aria-label="Ajuda">${ic('help', 14)}</button></div>
  <div class="mid"><ul class="side">${side.map(([i, t, c = '']) => `<li class="${c}">${ic(i, 14)}${t}</li>`).join('')}</ul><div class="bar">${ic('thinup', 7)}<b></b><span style="flex:1"></span>${ic('thin', 7)}</div>
    <div class="files"><table><colgroup><col style="width:224px"><col style="width:122px"><col style="width:102px"><col style="width:68px"></colgroup><thead><tr><th>Nome</th><th>Data de modificação</th><th>Tipo</th><th>Tamanho</th></tr></thead><tbody><tr><td><span>${ic('fy', 15)}TIFF</span></td><td>3/1/2022 11:00 AM</td><td>Pasta de arquivos</td><td></td></tr></tbody></table><span class="sort">${ic('thinup', 8)}</span></div></div>
  <div class="bot"><label><span><u>N</u>ome:</span><span class="fld"><input type="text" value="EX_CompPlex">${ic('thin', 9)}</span></label><label><span><u>T</u>ipo:</span><span class="fld g"><select><option>QGZ files (*.qgz)</option></select><span style="display:flex;margin-right:3px">${ic('thin', 9)}</span></span></label>
    <div class="act"><button class="hide">${ic('thinup', 8)}Ocultar pastas</button><button class="ok">Sa<u>l</u>var</button><button class="no">Cancelar</button></div></div>`;
});

/* paragraphs show their spaces as small middle dots, one quarter em wide */
const dots = (s) => s.replace(/·/g, '<i>·</i>');
define('word-page', `
  :host{display:flex;flex:1;min-height:0;background:#e6e6e6}
  .area{flex:1;display:flex;justify-content:center;padding-right:10px;overflow:hidden;min-height:0}
  article{width:1587px;background:#fff;border:1px solid #d0d0d0;border-width:0 1px;padding:9px 120px 0 302px;font-family:"Liberation Serif",serif;font-size:29px;color:#000}
  p{margin:0 0 25px;line-height:34px;white-space:nowrap}
  i{font-style:normal;font-size:22px;line-height:1}
  .fig{display:flex;align-items:flex-end;line-height:20px;margin-bottom:24px}
  em{font-style:normal;text-decoration:underline wavy #e00 1px;text-underline-offset:3px}
  .bx{border:1px solid #000;padding-bottom:2px}`, () => `
  <v-ruler></v-ruler><div class="area"><article>
    <p>${dots('Selecione·a·pasta·<em>Example</em>¶')}</p>
    <p>${dots('Nome:·<span class="bx"><em>EX_CompPlex</em></span>¶')}</p>
    <p class="fig"><save-dialog></save-dialog><span>¶</span></p>
    <p>${dots('Adicione·os·<em>layers</em>·e·<em>raster</em>·para·o·exercício·usando·o·painel·Browser¶')}</p>
    <p>${dots('No·painel·Browser:·(BD)·Favorites¶')}</p>
    <p>¶</p>
    <p>¶</p>
  </article></div>`);

define('word-status', `
  :host{display:flex;align-items:center;height:22px;background:#f3f2f1;border-top:1px solid #c8c6c4;color:#555;padding:0 8px;font-size:11px;white-space:nowrap}
  button{height:21px}
  .v{width:41px}.v.on{background:#d2d0ce}
  input[type=range]{appearance:none;width:100px;height:21px;margin:0 5px 0 6px;background:linear-gradient(#666,#666) 0 50%/100% 1px no-repeat,linear-gradient(#666,#666) 50% 50%/1px 7px no-repeat}
  input::-webkit-slider-thumb{appearance:none;width:5px;height:12px;background:#777}`, `
  <button>Página 9 de 9</button><button style="margin-left:18px">2043 palavras</button><button style="margin-left:17px" aria-label="Revisão">${ic('proof', 16)}</button><button style="margin-left:17px">Português (Brasil)</button><button style="margin-left:48px" aria-label="Macro">${ic('macro', 15)}</button><button style="margin-left:16px">${ic('access', 15)}Acessibilidade: investigar</button>
  <span style="flex:1"></span><button style="margin-right:11px;gap:2px">${ic('focus', 14)}Foco</button><button class="v" aria-label="Modo de leitura">${ic('read', 15)}</button><button class="v on" aria-label="Layout de impressão">${ic('print', 16)}</button><button class="v" aria-label="Layout da Web">${ic('web', 15)}</button><button aria-label="Reduzir" style="margin-left:5px">${ic('wmin', 9)}</button><input type="range" min="0" max="100" value="63" aria-label="Zoom"><button aria-label="Ampliar"><span style="font-size:13px">+</span></button><button style="margin-left:14px">200%</button>`);

define('word-window', ':host{display:flex;flex-direction:column;background:#f3f2f1;min-width:0;min-height:0;overflow:hidden}',
  '<word-title></word-title><ribbon-tabs></ribbon-tabs><word-ribbon></word-ribbon><h-ruler></h-ruler><word-page></word-page><word-status></word-status>');

define('desk-top', ':host{display:grid;grid-template-columns:minmax(0,1fr) minmax(0,1fr);grid-template-rows:minmax(0,1fr) 40px;height:100vh}',
  '<qgis-window></qgis-window><word-window></word-window><task-bar></task-bar><task-bar second></task-bar>');
</script>
</body>
</html>
